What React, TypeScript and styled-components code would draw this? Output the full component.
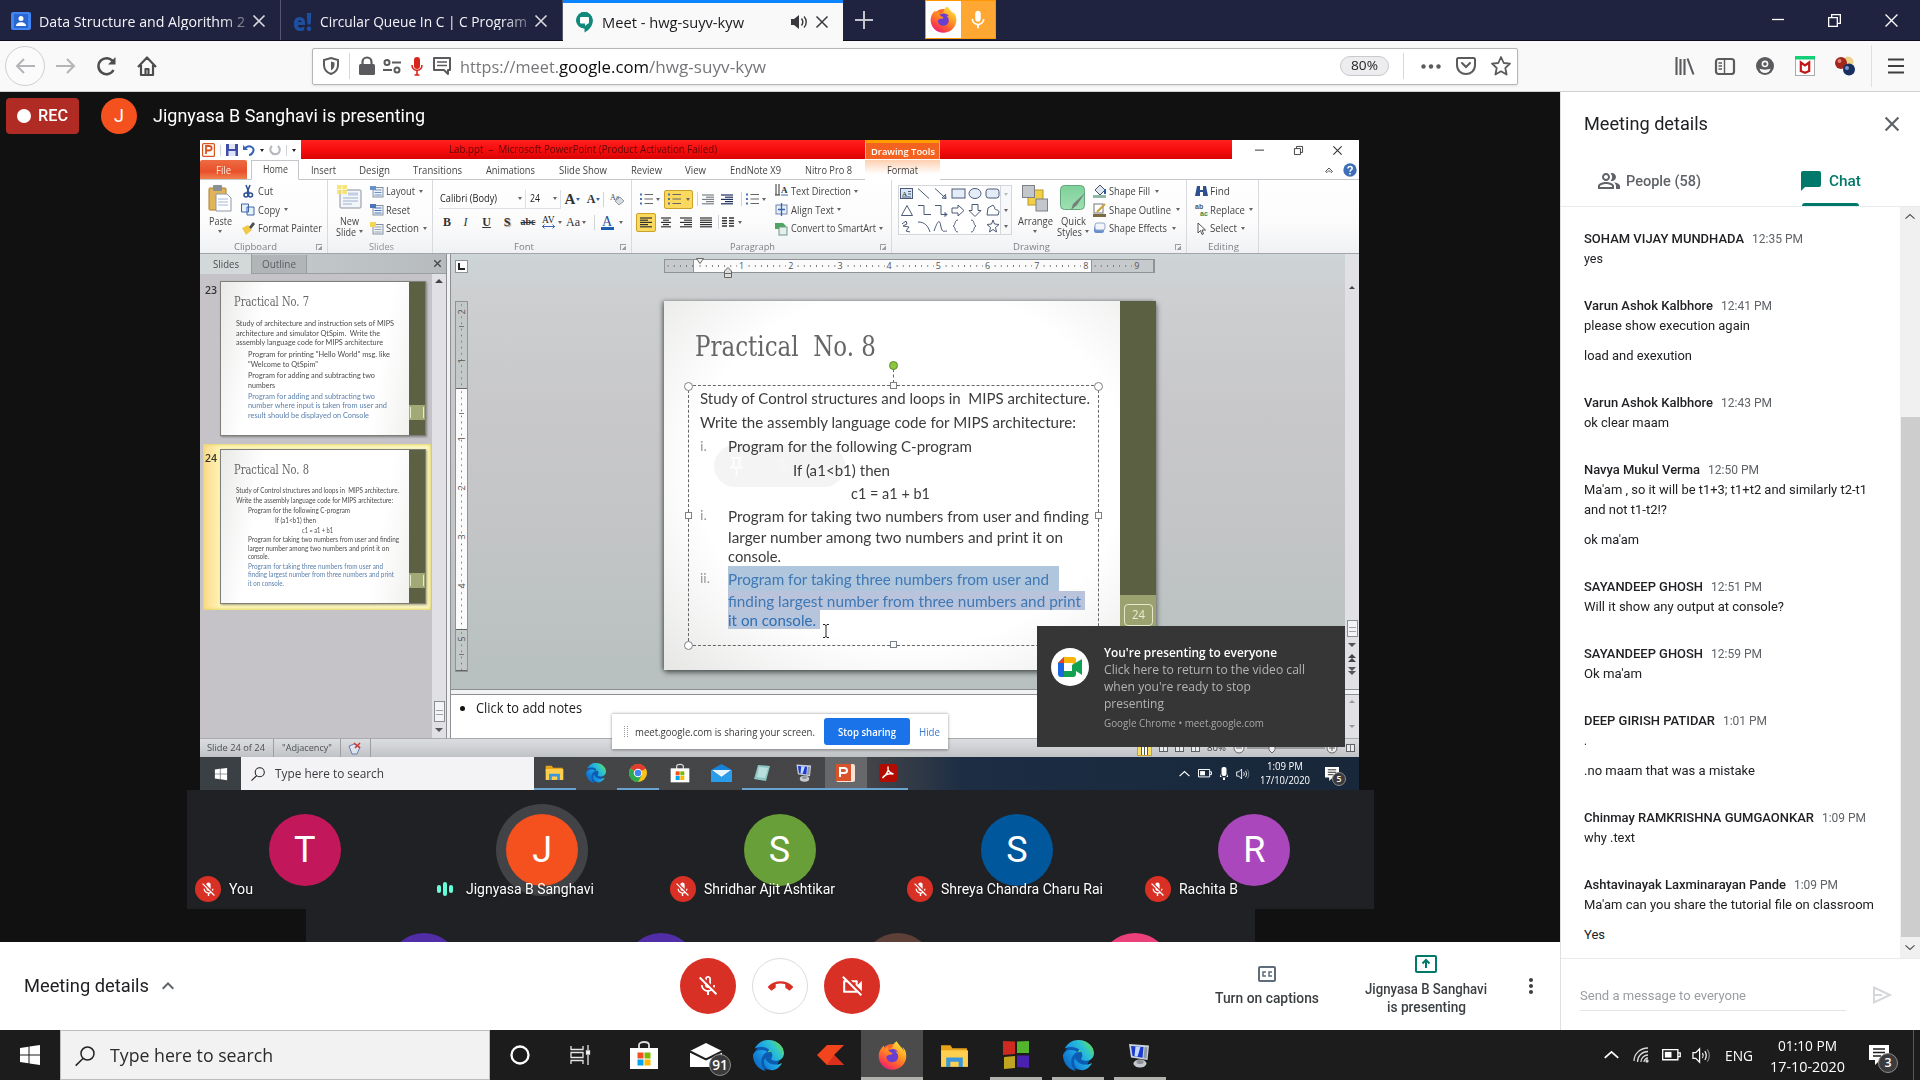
import React, { useLayoutEffect, useRef } from 'react';
import styled, { createGlobalStyle, css } from 'styled-components';
import {
  MdMicOff, MdOutlineMicOff, MdCallEnd, MdOutlineVideocamOff, MdOutlinePeopleAlt,
  MdChatBubble, MdMoreVert, MdKeyboardArrowUp, MdMic, MdOutlinePushPin,
} from 'react-icons/md';
import { FaEdge, FaFirefoxBrowser, FaWindows } from 'react-icons/fa6';

const SEG = '"Open Sans", "Noto Sans", sans-serif';
const ROB = 'Roboto, "Liberation Sans", sans-serif';
const LAT = 'Lato, "Open Sans", sans-serif';
const SER = '"Liberation Serif", "DejaVu Serif", serif';
const SLAB = '"DejaVu Serif Condensed", "DejaVu Serif", serif';

const Global = createGlobalStyle`
  * { box-sizing: border-box; }
  html, body { margin: 0; padding: 0; }
  body { width: 1920px; height: 1080px; overflow: hidden; font-family: ${ROB}; background: #111; }
  svg { display: block; flex: none; overflow: visible; }
`;

/* ---------- text that fills a known width ---------- */

type TextStyle = {
  $w: number; $s: number; $c?: string; $f?: string; $b?: number; $ml?: number; $lh?: number;
};
const TextBox = styled.span<TextStyle>`
  display: block;
  flex: none;
  width: ${(p) => p.$w}px;
  margin-left: ${(p) => p.$ml ?? 0}px;
  font: ${(p) => p.$b ?? 400} ${(p) => p.$s}px/${(p) => p.$lh ?? 1.2} ${(p) => p.$f ?? SEG};
  color: ${(p) => p.$c ?? '#444'};
  white-space: pre;
`;
const TextRun = styled.span`
  display: inline-block;
  transform-origin: 0 50%;
`;
type TProps = { w: number; s: number; c?: string; f?: string; b?: number; ml?: number; lh?: number; children: string };
function T({ w, s, c, f, b, ml, lh, children }: TProps) {
  const ref = useRef<HTMLSpanElement>(null);
  useLayoutEffect(() => {
    const el = ref.current;
    if (!el) return;
    el.style.transform = 'none';
    const natural = el.getBoundingClientRect().width;
    if (natural > 0) el.style.transform = `scaleX(${w / natural})`;
  }, [w, children]);
  return (
    <TextBox $w={w} $s={s} $c={c} $f={f} $b={b} $ml={ml} $lh={lh}>
      <TextRun ref={ref}>{children}</TextRun>
    </TextBox>
  );
}

/* ---------- shared icons ---------- */

type IconProps = { size?: number; color?: string };

const Defs = styled.svg`
  position: absolute;
  width: 0;
  height: 0;
`;
const Gradients = () => (
  <Defs>
    <defs>
      <linearGradient id="edgeFill" x1="0" y1="0.9" x2="1" y2="0.2">
        <stop offset="0" stopColor="#0b5cb8" />
        <stop offset="0.45" stopColor="#1a9be6" />
        <stop offset="0.75" stopColor="#2cc3d2" />
        <stop offset="1" stopColor="#62dc5a" />
      </linearGradient>
      <linearGradient id="foxFill" x1="0.8" y1="0" x2="0.2" y2="1">
        <stop offset="0" stopColor="#ffe84a" />
        <stop offset="0.4" stopColor="#ff9a1f" />
        <stop offset="0.75" stopColor="#ff4a3d" />
        <stop offset="1" stopColor="#e3168b" />
      </linearGradient>
      <linearGradient id="quickFill" x1="0" y1="0" x2="0" y2="1">
        <stop offset="0" stopColor="#7ed09a" />
        <stop offset="1" stopColor="#9fe0b2" />
      </linearGradient>
    </defs>
  </Defs>
);

const Edge = ({ size = 30 }: IconProps) => (
  <svg width={size} height={size} viewBox="0 0 30 30">
    <circle cx="13.500" cy="16" r="12.500" fill="#0d5cb4" />
    <path d="M14 12c5-2 8 1 8 4 0 4 4 3 6 0l1-8-9-5z" fill="#4fd46c" />
    <FaEdge size={30} fill="url(#edgeFill)" />
  </svg>
);
const Firefox = ({ size = 28 }: IconProps) => (
  <svg width={size} height={size} viewBox="0 0 28 28">
    <circle cx="14" cy="15" r="12" fill="#ff6a2c" />
    <circle cx="14.5" cy="14.5" r="7" fill="#6a3ed0" />
    <FaFirefoxBrowser size={28} fill="url(#foxFill)" />
  </svg>
);
const Folder = ({ size = 28 }: IconProps) => (
  <svg width={size} height={size} viewBox="0 0 28 28">
    <path d="M1 4h9l2 3h14v5H1z" fill="#e8a317" />
    <path d="M1 9h26v16H1z" fill="#ffd04f" />
    <path d="M6 25v-9h16v9h-4v-5h-8v5z" fill="#3a97dc" />
  </svg>
);
const Store = ({ size = 30 }: IconProps) => (
  <svg width={size} height={size} viewBox="0 0 30 30">
    <path d="M10 9V5c0-4 10-4 10 0v4" fill="none" stroke="#ddd" strokeWidth="1.8" />
    <path d="M1 8h28v21H1z" fill="#fff" />
    <path d="M8.500 12.500h6v6h-6z" fill="#f25022" />
    <path d="M15.500 12.500h6v6h-6z" fill="#7fba00" />
    <path d="M8.500 19.500h6v6h-6z" fill="#00a4ef" />
    <path d="M15.500 19.500h6v6h-6z" fill="#ffb900" />
  </svg>
);
const Computer = ({ size = 26 }: IconProps) => (
  <svg width={size} height={size} viewBox="0 0 26 26">
    <path d="M2 2l20 1.500-1.500 14.500L4 15.500z" fill="#cdd3db" />
    <path d="M4 4l12.500 1-1 10.800L5.500 14z" fill="#1a3bd0" />
    <path d="M8.500 4.400l5 .4-3 9.900-3-.5z" fill="#c9d6ff" />
    <path d="M17.500 5l3 .3-1 11.200-3-.4z" fill="#8f98a5" />
    <ellipse cx="13" cy="21.500" rx="6.500" ry="4" fill="#c6c9cd" />
    <ellipse cx="13" cy="20" rx="3.500" ry="2" fill="#8d9299" />
  </svg>
);
const Search = ({ size = 20, color = '#222' }: IconProps) => (
  <svg width={size} height={size} viewBox="0 0 20 20" fill="none" stroke={color} strokeWidth="1.500">
    <circle cx="12.500" cy="7.500" r="6.500" />
    <path d="M8 12.500L.7 19.600" />
  </svg>
);
const Cross = ({ size = 12, color = '#fff', w = 1.5 }: IconProps & { w?: number }) => (
  <svg width={size} height={size} viewBox="0 0 12 12" stroke={color} strokeWidth={w}>
    <path d="M.5.5l11 11M11.500.5l-11 11" />
  </svg>
);
const Restore = ({ size = 12, color = '#fff' }: IconProps) => (
  <svg width={size} height={size} viewBox="0 0 12 12" stroke={color} fill="none" strokeWidth="1.200">
    <path d="M.6 3.400h8v8h-8zM3.400 3.400V.6h8v8H8.600" />
  </svg>
);
const Dash = ({ size = 12, color = '#fff' }: IconProps) => (
  <svg width={size} height={size} viewBox="0 0 12 12" stroke={color}>
    <path d="M0 5.500h12" strokeWidth="1.300" />
  </svg>
);
const Chevron = ({ size = 14, color = '#fff' }: IconProps) => (
  <svg width={size} height={size / 2} viewBox="0 0 14 7" stroke={color} fill="none" strokeWidth="1.600">
    <path d="M.7 6.500L7 .8l6.300 5.700" />
  </svg>
);
const Speaker = ({ size = 20, color = '#fff' }: IconProps) => (
  <svg width={size} height={size} viewBox="0 0 20 20" stroke={color} fill="none" strokeWidth="1.300">
    <path d="M1 7h3l4-4v14l-4-4H1zM11 7.500c1 1.500 1 3.500 0 5M13.500 5.500c2 2.500 2 6.500 0 9" />
    <path d="M16 3.500c3 3.500 3 9.500 0 13" opacity=".45" />
  </svg>
);
const Battery = ({ size = 18, color = '#fff' }: IconProps) => (
  <svg width={size} height={size * 0.6} viewBox="0 0 20 12" fill="none" stroke={color} strokeWidth="1.400">
    <path d="M.7.7h16v10.600h-16zM17 4h2.200v4H17" />
    <path d="M3 3h7v6H3z" fill={color} stroke="none" />
  </svg>
);
const Note = ({ size = 20 }: IconProps) => (
  <svg width={size} height={size} viewBox="0 0 20 20">
    <path d="M0 0h20v15h-9l-5 5v-5H0z" fill="#fff" />
    <path d="M4 4h12M4 7.500h12M4 11h8" stroke="#1c1c1c" strokeWidth="1.300" />
  </svg>
);

/* ---------- browser chrome ---------- */

const TabBar = styled.div`
  display: flex;
  align-items: stretch;
  height: 41px;
  background: #202340;
  border-bottom: 1px solid #0d0e1d;
`;
const BrowserTab = styled.div<{ $active?: boolean; $w: number }>`
  display: flex;
  align-items: center;
  width: ${(p) => p.$w}px;
  padding-left: 11px;
  padding-top: 2px;
  border-right: 1px solid #55586e;
  ${(p) => p.$active && css`
    height: 41px;
    padding-top: 0;
    background: #f9f9fa;
    border-top: 3px solid #0a84ff;
    border-right: 0;
  `}
`;
const Favicon = styled.div`
  display: flex;
  width: 20px;
  margin-right: 8px;
  justify-content: center;
`;
const TabTitle = styled.div<{ $fade?: boolean }>`
  flex: 1;
  ${(p) => p.$fade && css`
    -webkit-mask-image: linear-gradient(90deg, #000 85%, rgba(0, 0, 0, 0.15));
    mask-image: linear-gradient(90deg, #000 85%, rgba(0, 0, 0, 0.15));
  `}
`;
const TabClose = styled.div`
  display: flex;
  align-items: center;
  gap: 7px;
  margin: 0 15px 0 0;
`;
const NewTab = styled.div`
  display: flex;
  align-items: center;
  justify-content: center;
  width: 42px;
`;
const ShareIndicator = styled.div`
  display: flex;
  width: 71px;
  height: 39px;
  margin-left: 40px;
  border: 1px solid #ff9500;
  background: #ffa733;
`;
const IndicatorHalf = styled.div<{ $white?: boolean }>`
  display: flex;
  flex: 1;
  align-items: center;
  justify-content: center;
  background: ${(p) => (p.$white ? '#fff' : 'transparent')};
`;
const WindowButtons = styled.div<{ $gap: number; $mr: number }>`
  display: flex;
  align-items: center;
  gap: ${(p) => p.$gap}px;
  margin-left: auto;
  margin-right: ${(p) => p.$mr}px;
`;
const NavBar = styled.div`
  display: flex;
  align-items: center;
  height: 51px;
  padding-left: 5px;
  background: #f9f9fa;
  border-bottom: 1px solid #d0d0d2;
`;
const BackButton = styled.div`
  display: flex;
  width: 40px;
  height: 40px;
  align-items: center;
  justify-content: center;
  border: 1px solid #cfcfd2;
  border-radius: 50%;
  background: #fbfbfc;
`;
const NavIcon = styled.div<{ $w?: number; $ml?: number }>`
  display: flex;
  width: ${(p) => p.$w ?? 40}px;
  margin-left: ${(p) => p.$ml ?? 0}px;
  align-items: center;
  justify-content: center;
`;
const UrlBar = styled.div`
  display: flex;
  align-items: center;
  width: 1206px;
  height: 37px;
  margin-left: 145px;
  border: 1px solid #b6b6b8;
  border-radius: 2px;
  background: #fff;
  box-shadow: 0 1px 3px rgba(0, 0, 0, 0.1);
`;
const Divider = styled.div<{ $h: number; $c?: string }>`
  width: 1px;
  height: ${(p) => p.$h}px;
  flex: none;
  background: ${(p) => p.$c ?? '#d7d7db'};
`;
const UrlText = styled.div`
  display: flex;
  flex: 1;
  padding-left: 9px;
  padding-top: 2px;
`;
const ZoomPill = styled.div`
  display: flex;
  width: 49px;
  height: 20px;
  align-items: center;
  justify-content: center;
  margin-right: 14px;
  border: 1px solid #c9c9cc;
  border-radius: 10px;
  background: #ededf0;
`;
const ToolIcons = styled.div`
  display: flex;
  align-items: center;
  margin-left: auto;
  padding-right: 5px;
`;

const g = '#5b5b5e';

function Browser() {
  return (
    <>
      <TabBar>
        <BrowserTab $w={281}>
          <Favicon>
            <svg width="20" height="18" viewBox="0 0 20 18">
              <rect width="20" height="18" rx="2" fill="#4285f4" />
              <rect x="3" y="2" width="14" height="14" fill="#2a66d0" />
              <circle cx="10" cy="6.500" r="2.500" fill="#fff" />
              <path d="M5 14c0-5 10-5 10 0z" fill="#fff" />
            </svg>
          </Favicon>
          <TabTitle $fade><T w={206} s={15} c="#f4f4f8">Data Structure and Algorithm 2</T></TabTitle>
          <TabClose><Cross color="#d9d9e0" w={1.6} /></TabClose>
        </BrowserTab>
        <BrowserTab $w={282}>
          <Favicon><T w={19} s={25} b={800} c="#1c4fa0" lh={1}>e!</T></Favicon>
          <TabTitle $fade><T w={207} s={15} c="#f4f4f8">Circular Queue In C | C Program</T></TabTitle>
          <TabClose><Cross color="#d9d9e0" w={1.6} /></TabClose>
        </BrowserTab>
        <BrowserTab $w={280} $active>
          <Favicon>
            <svg width="17" height="21" viewBox="0 0 17 21">
              <path d="M8.500 0a8.300 8.300 0 018.300 8.300c0 6-4 10-8.300 12.200v-4A8.200 8.200 0 018.500 0z" fill="#11897b" />
              <circle cx="8.300" cy="8.300" r="8.200" fill="#11897b" />
              <rect x="4" y="5" width="9" height="6.500" rx="1" fill="#fff" />
              <path d="M9 11h3.500L9 14z" fill="#fff" />
            </svg>
          </Favicon>
          <TabTitle><T w={142} s={15} c="#1a1a1e">Meet - hwg-suyv-kyw</T></TabTitle>
          <TabClose>
            <svg width="18" height="16" viewBox="0 0 18 16">
              <path d="M0 5h3l5-4v14l-5-4H0z" fill="#38383d" />
              <path d="M10.500 4.500c1.500 2 1.500 5 0 7M13 2.500c3 3 3 8 0 11" fill="none" stroke="#38383d" strokeWidth="1.400" />
            </svg>
            <Cross color="#38383d" w={1.5} />
          </TabClose>
        </BrowserTab>
        <NewTab>
          <svg width="18" height="18" viewBox="0 0 18 18" stroke="#c3c4ce" strokeWidth="2"><path d="M9 0v18M0 9h18" /></svg>
        </NewTab>
        <ShareIndicator>
          <IndicatorHalf $white><Firefox size={27} /></IndicatorHalf>
          <IndicatorHalf><MdMic size={22} color="#fff" /></IndicatorHalf>
        </ShareIndicator>
        <WindowButtons $gap={44} $mr={22}>
          <Dash size={12} /><Restore size={13} /><Cross size={13} w={1.2} />
        </WindowButtons>
      </TabBar>
      <NavBar>
        <BackButton>
          <svg width="20" height="16" viewBox="0 0 20 16" stroke="#b5b5b8" strokeWidth="2" fill="none"><path d="M9 1L2 8l7 7M2 8h18" /></svg>
        </BackButton>
        <NavIcon $w={42}>
          <svg width="20" height="16" viewBox="0 0 20 16" stroke="#b5b5b8" strokeWidth="2" fill="none"><path d="M11 1l7 7-7 7M18 8H0" /></svg>
        </NavIcon>
        <NavIcon>
          <svg width="20" height="20" viewBox="0 0 20 20" stroke="#4d4d50" strokeWidth="2.500" fill="none"><path d="M16.500 14A8 8 0 1116 5.500" /><path d="M18.500 1v7.500H11z" fill="#4d4d50" stroke="none" /></svg>
        </NavIcon>
        <NavIcon>
          <svg width="20" height="20" viewBox="0 0 20 20" stroke="#4d4d50" strokeWidth="2.200" fill="none" strokeLinejoin="round"><path d="M1 11l9-9.500 9 9.500M4 9v10h12V9M8.500 19v-6h3v6" /></svg>
        </NavIcon>
        <UrlBar>
          <NavIcon $w={36}>
            <svg width="16" height="18" viewBox="0 0 16 18" stroke={g} strokeWidth="2" fill="none"><path d="M8 1l7 2v5c0 5-3 7.500-7 9-4-1.500-7-4-7-9V3z" /><path d="M8 4.500v9c2-1 3.500-3 3.500-6v-2z" fill={g} stroke="none" /></svg>
          </NavIcon>
          <Divider $h={26} />
          <NavIcon $w={33}>
            <svg width="16" height="18" viewBox="0 0 16 18"><rect x="0" y="7" width="16" height="11" rx="1.500" fill={g} /><path d="M3.500 8V5a4.500 4.500 0 019 0v3" stroke={g} strokeWidth="2.200" fill="none" /></svg>
          </NavIcon>
          <NavIcon $w={18}>
            <svg width="18" height="15" viewBox="0 0 18 15" stroke={g} strokeWidth="2" fill="none"><circle cx="4" cy="3.500" r="2.500" /><path d="M9 3.500h9M0 11h9" strokeWidth="2" /><circle cx="14" cy="11" r="2.500" /></svg>
          </NavIcon>
          <NavIcon $w={32}>
            <svg width="12" height="19" viewBox="0 0 12 19"><rect x="3" y="0" width="6" height="12" rx="3" fill="#d7261d" /><path d="M1 8c0 7 10 7 10 0M6 13v5M3.500 18h5" stroke="#d7261d" strokeWidth="1.600" fill="none" /></svg>
          </NavIcon>
          <NavIcon $w={18}>
            <svg width="20" height="18" viewBox="0 0 20 18" stroke={g} fill="none"><path d="M2 1h16v12h-2v4l-4-4H2z" strokeWidth="2" strokeLinejoin="round" /><path d="M5 5h10M5 8.500h10" strokeWidth="1.500" /></svg>
          </NavIcon>
          <UrlText>
            <T w={99} s={17} c="#77777b">https://meet.</T>
            <T w={90} s={17} c="#0c0c0d">google.com</T>
            <T w={117} s={17} c="#77777b">/hwg-suyv-kyw</T>
          </UrlText>
          <ZoomPill><T w={27} s={13} c="#1c1c1e">80%</T></ZoomPill>
          <Divider $h={26} />
          <NavIcon $w={54}>
            <svg width="20" height="5" viewBox="0 0 20 5" fill={g}><circle cx="2.500" cy="2.500" r="2.200" /><circle cx="10" cy="2.500" r="2.200" /><circle cx="17.500" cy="2.500" r="2.200" /></svg>
          </NavIcon>
          <NavIcon $w={16}>
            <svg width="20" height="18" viewBox="0 0 20 18" stroke={g} fill="none" strokeWidth="2"><path d="M2.500 1h15c1 0 1.500.5 1.500 1.500V8c0 12-18 12-18 0V2.500C1 1.500 1.500 1 2.500 1z" /><path d="M6 6l4 4 4-4" strokeLinecap="round" /></svg>
          </NavIcon>
          <NavIcon $w={33} $ml={10}>
            <svg width="20" height="20" viewBox="0 0 20 20" stroke={g} fill="none" strokeWidth="1.800" strokeLinejoin="round"><path d="M10 1l2.700 6 6.300.7-4.700 4.300 1.300 6.500L10 15.300l-5.600 3.200 1.300-6.500L1 7.700 7.300 7z" /></svg>
          </NavIcon>
        </UrlBar>
        <ToolIcons>
          <NavIcon>
            <svg width="20" height="18" viewBox="0 0 20 18" stroke={g} strokeWidth="2.100" fill="none"><path d="M1.500 0v18M5.500 2v16M9.500 2v16M12.500 1.500L18.500 17.500" /></svg>
          </NavIcon>
          <NavIcon>
            <svg width="20" height="17" viewBox="0 0 20 17" stroke={g} strokeWidth="2.200" fill="none"><rect x="1" y="1" width="18" height="15" rx="2.500" /><path d="M9.500 1v15M3.500 5h3.500M3.500 8h3.500M3.500 11h3.500" strokeWidth="1.400" /></svg>
          </NavIcon>
          <NavIcon>
            <svg width="18" height="18" viewBox="0 0 18 18"><circle cx="9" cy="9" r="9" fill={g} /><circle cx="9" cy="6.800" r="3.400" fill="#f9f9fa" /><path d="M3.500 11.500c2 1.500 9 1.500 11 0-1 6-10 6-11 0z" fill="#f9f9fa" /><circle cx="9" cy="7" r="1.800" fill={g} /></svg>
          </NavIcon>
          <NavIcon>
            <svg width="20" height="20" viewBox="0 0 20 20"><rect x=".5" y=".5" width="19" height="19" fill="#fff" stroke="#aaa" /><path d="M0 0h20v3.500H0z" fill="#13cf75" /><path d="M5.800 15V6.500l4.200 3 4.200-3V15L10 16.800z" fill="none" stroke="#c01818" strokeWidth="2.200" /></svg>
          </NavIcon>
          <NavIcon>
            <svg width="20" height="20" viewBox="0 0 20 20"><circle cx="13" cy="6" r="5.500" fill="#efd28a" /><circle cx="6" cy="7" r="6" fill="#a3261c" /><circle cx="4.500" cy="5" r="2" fill="#d98078" /><circle cx="14" cy="13.500" r="6" fill="#17305f" /><circle cx="12" cy="12" r="2" fill="#7d96d0" /></svg>
          </NavIcon>
          <NavIcon $w={12}><Divider $h={42} $c="#e0e0e2" /></NavIcon>
          <NavIcon $w={38}>
            <svg width="16" height="16" viewBox="0 0 16 16" stroke="#3f3f42" strokeWidth="2.200"><path d="M0 1.500h16M0 8h16M0 14.500h16" /></svg>
          </NavIcon>
        </ToolIcons>
      </NavBar>
    </>
  );
}

/* ---------- shared screen: ribbon ---------- */

const Shared = styled.div`
  position: relative;
  display: flex;
  flex-direction: column;
  flex: none;
  width: 1159px;
  height: 650px;
  margin-left: 200px;
  overflow: hidden;
  background: #fff;
`;
const PptTitle = styled.div`
  display: flex;
  height: 20px;
`;
const QuickAccess = styled.div`
  display: flex;
  width: 101px;
  align-items: center;
  padding-left: 2px;
  gap: 5px;
`;
const RedBar = styled.div`
  display: flex;
  width: 931px;
  height: 19px;
  align-items: center;
  background: linear-gradient(#ff2020, #f80d0d 50%, #d80404);
`;
const DrawingTools = styled.div`
  display: flex;
  align-self: flex-start;
  justify-content: center;
  width: 75px;
  height: 19px;
  margin-left: 148px;
  padding-top: 4px;
  border-top: 3px solid #ff9c00;
  border-left: 1px solid #ffb26b;
  border-right: 1px solid #ffb26b;
  background: #f4621f;
`;
const MenuTabs = styled.div`
  display: flex;
  align-items: center;
  height: 20px;
  border-bottom: 1px solid #c3c6ca;
`;
const FileTab = styled.div`
  display: flex;
  width: 47px;
  height: 19px;
  align-items: center;
  justify-content: center;
  border-radius: 2px 2px 0 0;
  background: linear-gradient(#ef6b43, #e8502a 60%, #f0804c);
`;
const HomeTab = styled.div`
  display: flex;
  width: 48px;
  height: 20px;
  margin-left: 4px;
  padding-bottom: 1px;
  align-items: center;
  justify-content: center;
  border: 1px solid #c3c6ca;
  border-bottom-color: #fff;
  background: #fff;
`;
const FormatTab = styled.div`
  display: flex;
  width: 75px;
  height: 20px;
  margin-left: 13px;
  align-items: center;
  justify-content: center;
  background: linear-gradient(#fdd0b0, #fff 70%);
`;
const Ribbon = styled.div`
  display: flex;
  height: 74px;
  border-bottom: 1px solid #a2a5aa;
  background: linear-gradient(#fff, #fbfbfc 60%, #eff1f3);
`;
const Group = styled.div<{ $w: number; $pl: number }>`
  display: grid;
  grid-template: 60px 13px / 1fr;
  width: ${(p) => p.$w}px;
  padding-left: ${(p) => p.$pl}px;
  border-right: 1px solid #d8dadd;
`;
const GroupBody = styled.div`
  display: flex;
`;
const GroupLabel = styled.div`
  display: flex;
  align-items: center;
`;
const Launcher = styled.div`
  width: 6px;
  height: 6px;
  margin-left: auto;
  margin-right: 5px;
  border-left: 1px solid #9b9ea3;
  border-top: 1px solid #9b9ea3;
  background: linear-gradient(135deg, transparent 55%, #9b9ea3 55%);
`;
const Big = styled.div<{ $w: number; $ml?: number }>`
  display: flex;
  flex-direction: column;
  align-items: center;
  width: ${(p) => p.$w}px;
  margin-left: ${(p) => p.$ml ?? 0}px;
  padding-top: 5px;
`;
const BigIcon = styled.div`
  height: 30px;
`;
const BigRow = styled.div`
  display: flex;
  height: 11px;
  align-items: center;
  gap: 3px;
`;
const SmallCol = styled.div<{ $ml?: number }>`
  display: flex;
  flex-direction: column;
  padding-top: 2px;
  margin-left: ${(p) => p.$ml ?? 0}px;
`;
const SmallRow = styled.div<{ $gap?: number }>`
  display: flex;
  height: 18.5px;
  align-items: center;
  gap: ${(p) => p.$gap ?? 3}px;
`;
const Caret = styled.i<{ $ml?: number; $c?: string }>`
  flex: none;
  width: 0;
  height: 0;
  margin-left: ${(p) => p.$ml ?? 0}px;
  border: 2.5px solid transparent;
  border-top: 3px solid ${(p) => p.$c ?? '#666'};
  border-bottom: 0;
`;
const ToolCol = styled.div<{ $w: number }>`
  display: flex;
  flex-direction: column;
  flex: none;
  width: ${(p) => p.$w}px;
  padding-top: 8px;
`;
const ToolRow = styled.div<{ $h: number }>`
  display: flex;
  align-items: center;
  height: ${(p) => p.$h}px;
`;
const Combo = styled.div<{ $w: number }>`
  display: flex;
  align-items: center;
  width: ${(p) => p.$w}px;
  height: 19px;
  border-right: 1px solid #dcdfe3;
  border-bottom: 1px solid #dcdfe3;
`;
const Glyph = styled.span<{ $w: number; $s: number; $i?: boolean; $u?: boolean; $b?: boolean; $strike?: boolean; $sh?: boolean }>`
  flex: none;
  width: ${(p) => p.$w}px;
  text-align: center;
  font: ${(p) => (p.$i ? 'italic' : 'normal')} ${(p) => (p.$b ? 700 : 400)} ${(p) => p.$s}px/1 ${SER};
  color: #333;
  text-decoration: ${(p) => (p.$u ? 'underline' : p.$strike ? 'line-through' : 'none')};
  text-shadow: ${(p) => (p.$sh ? '1px 1px 1px #888' : 'none')};
`;
const Cell = styled.div<{ $w: number; $on?: boolean; $h?: number }>`
  display: flex;
  flex: none;
  align-items: center;
  justify-content: center;
  width: ${(p) => p.$w}px;
  height: ${(p) => p.$h ?? 19}px;
  ${(p) => p.$on && css`
    border: 1px solid #c9a227;
    border-radius: 2px;
    background: #fbd95e;
  `}
`;
const Bar = styled.i<{ $h: number }>`
  width: 1px;
  height: ${(p) => p.$h}px;
  background: #d0d3d8;
`;
const Gallery = styled.div`
  display: flex;
  width: 114px;
  height: 50px;
  margin-top: 5px;
  border: 1px solid #d3d6da;
  background: #fff;
`;
const GalleryScroll = styled.div`
  display: flex;
  flex-direction: column;
  width: 12px;
  align-items: center;
  justify-content: space-around;
  margin-left: auto;
  border-left: 1px solid #d3d6da;
  background: #f7f8f9;
`;

const Lines = ({ k = 0, c = '#333', h = 11 }: { k?: number; c?: string; h?: number }) => {
  const w = [[12, 8, 12, 8, 12], [10, 6, 10, 6, 10], [12, 8, 12, 8, 12], [12, 12, 12, 12, 12]][k];
  return (
    <svg width="12" height={h} viewBox="0 0 12 11" stroke={c} strokeWidth="1.200">
      {w.map((x, i) => {
        const s = k === 2 ? 12 - x : k === 1 ? (12 - x) / 2 : 0;
        return <path key={i} d={`M${s} ${1 + i * 2.2}h${x}`} />;
      })}
    </svg>
  );
};
const ListIcon = ({ blue = true }: { blue?: boolean }) => (
  <svg width="13" height="12" viewBox="0 0 13 12">
    <path d="M4.500 1.500h8.500M4.500 6h8.500M4.500 10.500h8.500" stroke="#666" strokeWidth="1.200" />
    <path d="M0 .5h2v2H0zM0 5h2v2H0zM0 9.500h2v2H0z" fill={blue ? '#4a73b8' : '#333'} />
  </svg>
);
const PageIcon = ({ c = '#6a92c8', star = false }: { c?: string; star?: boolean }) => (
  <svg width="14" height="13" viewBox="0 0 14 13">
    <rect x="3" y="2.500" width="10" height="9.500" fill="#eef3fa" stroke="#7b8797" strokeWidth=".9" />
    <path d="M4.500 5h7M4.500 7.500h7M4.500 10h7" stroke={c} />
    {star && <path d="M0 0h6v5H0z" fill="#f4d650" />}
    {!star && <path d="M0 1h6v4H0z" fill={c} />}
  </svg>
);

const menu: [string, number, number][] = [
  ['Insert', 25, 12], ['Design', 31, 23], ['Transitions', 49, 23], ['Animations', 49, 24],
  ['Slide Show', 48, 24], ['Review', 31, 24], ['View', 21, 23], ['EndNote X9', 51, 24], ['Nitro Pro 8', 47, 24],
];

function PptRibbon() {
  return (
    <>
      <PptTitle>
        <QuickAccess>
          <svg width="13" height="14" viewBox="0 0 13 14"><rect x=".6" y=".6" width="11.800" height="12.800" rx="1" fill="#fff" stroke="#d9541e" strokeWidth="1.200" /><path d="M4 11V3h3c3.500 0 3.500 4.500 0 4.500H4" stroke="#d9541e" strokeWidth="1.800" fill="none" /></svg>
          <Bar $h={11} />
          <svg width="12" height="12" viewBox="0 0 12 12"><path d="M0 0h12v12H0z" fill="#3f4fa8" /><path d="M3 0h6v5H3zM2.500 7h7v5h-7z" fill="#dfe5f5" /></svg>
          <svg width="12" height="12" viewBox="0 0 12 12" fill="none" stroke="#3463b8" strokeWidth="2"><path d="M2 4c5-4 10 0 8 4-1 2-3 3-4 3" /><path d="M0 1v5h5z" fill="#3463b8" stroke="none" /></svg>
          <Caret $c="#222" />
          <svg width="12" height="12" viewBox="0 0 12 12" fill="none" stroke="#b5b8bd" strokeWidth="2"><path d="M3 2c-4 4 0 9 4 8 4 0 5-5 2-8" /></svg>
          <Bar $h={11} />
          <Caret $c="#222" />
        </QuickAccess>
        <RedBar>
          <T w={268} s={10.5} c="#5e0606" ml={148}>Lab.ppt  –  Microsoft PowerPoint (Product Activation Failed)</T>
          <DrawingTools><T w={64} s={9.5} b={600} c="#fff" lh={1}>Drawing Tools</T></DrawingTools>
        </RedBar>
        <WindowButtons $gap={30} $mr={17}>
          <Dash size={9} color="#333" /><Restore size={9} color="#333" /><Cross size={9} color="#333" w={1.5} />
        </WindowButtons>
      </PptTitle>
      <MenuTabs>
        <FileTab><T w={15} s={10} c="#ffe9df">File</T></FileTab>
        <HomeTab><T w={25} s={10}>Home</T></HomeTab>
        {menu.map(([t, w, ml]) => <T key={t} w={w} ml={ml} s={10}>{t}</T>)}
        <FormatTab><T w={31} s={10}>Format</T></FormatTab>
        <WindowButtons $gap={10} $mr={2}>
          <svg width="8" height="7" viewBox="0 0 8 7" stroke="#555" fill="none"><path d="M.5 5.500L4 2l3.500 3.500-1.500 1-2-2-2 2z" /></svg>
          <svg width="14" height="14" viewBox="0 0 14 14"><circle cx="7" cy="7" r="6.700" fill="#3f6fb8" /><path d="M5 5.500c0-3 4.200-2.500 4.200-.3C9.200 7 7 6.800 7 8.700M7 10v1.500" stroke="#fff" strokeWidth="1.500" fill="none" /></svg>
        </WindowButtons>
      </MenuTabs>
      <Ribbon>
        <Group $w={128} $pl={7}>
          <GroupBody>
            <Big $w={26}>
              <BigIcon>
                <svg width="24" height="27" viewBox="0 0 24 27"><rect x="1" y="3" width="17" height="22" rx="1" fill="#e2b45a" stroke="#a97e2e" /><rect x="5" y="0" width="9" height="6" rx="1" fill="#8b8f97" /><path d="M8 9h11l4 4v13H8z" fill="#fff" stroke="#8d97a6" /><path d="M10 14h10M10 17h10M10 20h10" stroke="#a6b8d4" /></svg>
              </BigIcon>
              <BigRow><T w={23} s={10}>Paste</T></BigRow>
              <BigRow><Caret /></BigRow>
            </Big>
            <SmallCol $ml={8}>
              <SmallRow>
                <svg width="14" height="13" viewBox="0 0 14 13" fill="none" stroke="#2c4f94" strokeWidth="1.500"><path d="M5 0l3 8M9 0L6 8" /><circle cx="5" cy="10" r="2" /><circle cx="9.500" cy="10" r="2" /></svg>
                <T w={15} s={10}>Cut</T>
              </SmallRow>
              <SmallRow>
                <svg width="14" height="13" viewBox="0 0 14 13" stroke="#3c66a8" fill="#e6eefa"><path d="M.5 1h7v8h-7zM6 4h7v8H6z" /></svg>
                <T w={22} s={10}>Copy</T><Caret $ml={1} />
              </SmallRow>
              <SmallRow>
                <svg width="14" height="13" viewBox="0 0 14 13"><path d="M1 6l6-3 4 5-6 5z" fill="#f0c94a" /><path d="M8 5l4-5 2 2-4 5z" fill="#4a4d55" /></svg>
                <T w={64} s={10}>Format Painter</T>
              </SmallRow>
            </SmallCol>
          </GroupBody>
          <GroupLabel><T w={43} ml={27} s={9.5} c="#7d8085">Clipboard</T><Launcher /></GroupLabel>
        </Group>
        <Group $w={105} $pl={5}>
          <GroupBody>
            <Big $w={33}>
              <BigIcon>
                <svg width="25" height="26" viewBox="0 0 25 26"><rect x="3" y="5" width="21" height="18" rx="1" fill="#f2f5f9" stroke="#8b929d" /><path d="M6 13h15M6 16h15M6 19h9" stroke="#9eb0cc" /><rect x="11" y="7.500" width="10" height="3" fill="#c2cfe4" /><path d="M0 0h10v9H0z" fill="#f5de5c" opacity=".8" /><path d="M5 0v9M0 4.500h10" stroke="#fff7c4" /></svg>
              </BigIcon>
              <BigRow><T w={19} s={10}>New</T></BigRow>
              <BigRow><T w={20} s={10}>Slide</T><Caret /></BigRow>
            </Big>
            <SmallCol $ml={4}>
              <SmallRow $gap={2}><PageIcon /><T w={29} s={10}>Layout</T><Caret $ml={2} /></SmallRow>
              <SmallRow $gap={2}><PageIcon c="#4b74bb" /><T w={24} s={10}>Reset</T></SmallRow>
              <SmallRow $gap={2}><PageIcon c="#98a2b0" star /><T w={33} s={10}>Section</T><Caret $ml={2} /></SmallRow>
            </SmallCol>
          </GroupBody>
          <GroupLabel><T w={25} ml={36} s={9.5} c="#8f9296">Slides</T></GroupLabel>
        </Group>
        <Group $w={199} $pl={6}>
          <GroupBody>
            <ToolCol $w={190}>
              <ToolRow $h={22}>
                <Combo $w={87}><T w={57} ml={1} s={10.5} c="#222">Calibri (Body)</T><Caret $ml={21} /></Combo>
                <Combo $w={35}><T w={10} ml={4} s={10.5} c="#222">24</T><Caret $ml={13} /></Combo>
                <Cell $w={22}><Glyph $w={11} $s={15} $b>A</Glyph><Caret $c="#3864ae" /></Cell>
                <Cell $w={20}><Glyph $w={9} $s={12} $b>A</Glyph><Caret $c="#3864ae" /></Cell>
                <Bar $h={15} />
                <Cell $w={25}><svg width="14" height="14" viewBox="0 0 14 14"><text x="0" y="8" fontSize="8" fontFamily="Liberation Serif" fill="#444">Aa</text><path d="M5 9l5-4 4 4-5 4z" fill="#d7dbe2" stroke="#7f8690" strokeWidth=".8" /></svg></Cell>
              </ToolRow>
              <ToolRow $h={24}>
                <Glyph $w={16} $s={12} $b>B</Glyph>
                <Glyph $w={21} $s={12} $i>I</Glyph>
                <Glyph $w={21} $s={12} $b $u>U</Glyph>
                <Glyph $w={20} $s={12} $b $sh>S</Glyph>
                <Glyph $w={22} $s={10} $b $strike>abc</Glyph>
                <Cell $w={19}><svg width="14" height="14" viewBox="0 0 14 14"><text x="0" y="8" fontSize="9.500" fontFamily="Liberation Serif" fill="#222">AV</text><path d="M0 11.500h13M2.500 9.500l-2 2 2 2M10.500 9.500l2 2-2 2" stroke="#3a67b5" fill="none" /></svg></Cell>
                <Caret />
                <Glyph $w={22} $s={12}>Aa</Glyph><Caret $ml={-2} />
                <Cell $w={8} /><Bar $h={15} />
                <Cell $w={24}><svg width="13" height="15" viewBox="0 0 13 15"><text x="1" y="11" fontSize="14" fontFamily="Liberation Serif" fill="#28529c">A</text><path d="M0 12h13v3H0z" fill="#1c5fb0" /></svg></Cell>
                <Caret />
              </ToolRow>
            </ToolCol>
          </GroupBody>
          <GroupLabel><T w={20} ml={75} s={9.5} c="#7d8085">Font</T><Launcher /></GroupLabel>
        </Group>
        <Group $w={260} $pl={4}>
          <GroupBody>
            <ToolCol $w={139}>
              <ToolRow $h={22}>
                <Cell $w={20}><ListIcon /></Cell><Caret />
                <Cell $w={4} /><Cell $w={29} $on><ListIcon /><Caret $ml={5} /></Cell>
                <Cell $w={4} /><Bar $h={14} />
                <Cell $w={20}><Lines k={2} c="#7b7f86" /></Cell>
                <Cell $w={18}><Lines k={2} c="#1e2f5c" /></Cell>
                <Cell $w={5} /><Bar $h={14} />
                <Cell $w={20}><ListIcon /></Cell><Caret />
              </ToolRow>
              <ToolRow $h={24}>
                <Cell $w={20} $on><Lines k={0} /></Cell>
                <Cell $w={20}><Lines k={1} /></Cell>
                <Cell $w={20}><Lines k={2} /></Cell>
                <Cell $w={20}><Lines k={3} /></Cell>
                <Cell $w={2} /><Bar $h={14} />
                <Cell $w={17}><svg width="12" height="10" viewBox="0 0 12 10" stroke="#333" strokeWidth="1.400"><path d="M0 1h5M0 3.700h5M0 6.400h5M0 9h5M7 1h5M7 3.700h5M7 6.400h5M7 9h5" /></svg></Cell>
                <Caret $ml={2} />
              </ToolRow>
            </ToolCol>
            <SmallCol>
              <SmallRow>
                <svg width="13" height="14" viewBox="0 0 13 14"><path d="M1 0v11M4 0v11M0 11h5" stroke="#333" /><text x="6" y="9" fontSize="9" fontWeight="700" fontFamily="Liberation Serif" fill="#234">A</text><path d="M6 11h7" stroke="#3864ae" /></svg>
                <T w={60} s={10}>Text Direction</T><Caret />
              </SmallRow>
              <SmallRow>
                <svg width="13" height="13" viewBox="0 0 13 13"><rect x="1" y="2" width="11" height="9" fill="#e8eef7" stroke="#7187ac" /><path d="M6.500 0v13M3 6.500h7" stroke="#3864ae" strokeWidth="1.300" /></svg>
                <T w={43} s={10}>Align Text</T><Caret />
              </SmallRow>
              <SmallRow>
                <svg width="13" height="13" viewBox="0 0 13 13"><path d="M0 1h8l3 3-3 3H0z" fill="#4da560" /><rect x="4" y="5" width="8" height="8" fill="#e7efe9" stroke="#698" /></svg>
                <T w={85} s={10}>Convert to SmartArt</T><Caret />
              </SmallRow>
            </SmallCol>
          </GroupBody>
          <GroupLabel><T w={45} ml={94} s={9.5} c="#7d8085">Paragraph</T><Launcher /></GroupLabel>
        </Group>
        <Group $w={295} $pl={6}>
          <GroupBody>
            <Gallery>
              <svg width="101" height="48" viewBox="0 0 101 48" fill="none" stroke="#4b5a78" strokeWidth="1">
                <rect x="1.500" y="2.500" width="12" height="10" fill="#d9e6f6" /><text x="3" y="10" fontSize="7" fontFamily="Liberation Serif" fill="#223" stroke="none">A</text><path d="M9 5.500h3M9 8h3M3 11h9" />
                <path d="M19 2.500l11 10M36 2.500l11 10M47 12.500l-4-.5 3.500-3.500z" />
                <rect x="53" y="3" width="13" height="9" fill="#e4ecf7" /><ellipse cx="76" cy="7.500" rx="6" ry="5" fill="#e4ecf7" /><rect x="87" y="3" width="13" height="9" rx="2.500" fill="#e4ecf7" />
                <path d="M8 19.500l5.500 10h-11zM19 19.500h6v9h7M36 19.500h6v9h6M48 28.500l-2-2v4zM53 22h6v-3l6 5.500-6 5.500v-3h-6zM73 18.500h6v6h3l-6 6-6-6h3zM89 22l5-3 2 3c-2 2 4 1 4 4l-1 3H88z" />
                <path d="M3 38l4-3 1 3-4 2 6 1-3 4 4 1M19 36c7 0 10 4 12 10M35 45c5-14 6-10 7-4s4 4 6 4M59 34c-4 0-2 5-5 6 3 1 1 6 5 6M72 34c4 0 2 5 5 6-3 1-1 6-5 6M94 34l1.500 4 4.500.5-3.500 3 1 4.500-3.500-2.500-3.500 2.500 1-4.500-3.500-3 4.500-.5z" />
              </svg>
              <GalleryScroll><Caret $c="#bbb" /><Caret /><Caret /></GalleryScroll>
            </Gallery>
            <Big $w={40} $ml={3}>
              <BigIcon>
                <svg width="26" height="27" viewBox="0 0 26 27"><rect x="6" y="5" width="15" height="15" fill="#f3cf45" stroke="#b79827" /><rect x=".5" y=".5" width="12" height="12" fill="#c3c6cb" stroke="#7c8086" /><rect x="14" y="14" width="11.500" height="12" fill="#c3c6cb" stroke="#7c8086" /></svg>
              </BigIcon>
              <BigRow><T w={35} s={10}>Arrange</T></BigRow>
              <BigRow><Caret /></BigRow>
            </Big>
            <Big $w={34} $ml={1}>
              <BigIcon>
                <svg width="26" height="27" viewBox="0 0 26 27"><rect x=".5" y=".5" width="24" height="24" rx="4" fill="url(#quickFill)" stroke="#62a87a" /><path d="M25 8L17 20l-6 5 2-6z" fill="#75807a" /></svg>
              </BigIcon>
              <BigRow><T w={25} s={10}>Quick</T></BigRow>
              <BigRow><T w={25} s={10}>Styles</T><Caret /></BigRow>
            </Big>
            <SmallCol $ml={3}>
              <SmallRow>
                <svg width="13" height="14" viewBox="0 0 13 14"><path d="M2 6l5-5 5 5-5 5z" fill="#dfe7f2" stroke="#456" /><path d="M0 11h13v3H0z" fill="#8fb8a9" /><path d="M12 5v5" stroke="#2d5ba8" strokeWidth="2" /></svg>
                <T w={41} s={10}>Shape Fill</T><Caret $ml={2} />
              </SmallRow>
              <SmallRow>
                <svg width="13" height="14" viewBox="0 0 13 14"><rect x="1" y="1" width="9" height="9" fill="#fff" stroke="#777" /><path d="M4 9l8-8" stroke="#caa23a" strokeWidth="2" /><path d="M0 11h13v3H0z" fill="#7b6a42" /></svg>
                <T w={62} s={10}>Shape Outline</T><Caret $ml={2} />
              </SmallRow>
              <SmallRow>
                <svg width="13" height="12" viewBox="0 0 13 12"><rect x="1" y="4" width="10" height="7" rx="2" fill="#6a8fd0" /><rect x="2" y="1" width="10" height="7" rx="2" fill="#f2f6fc" stroke="#92a6c6" /></svg>
                <T w={58} s={10}>Shape Effects</T><Caret $ml={2} />
              </SmallRow>
            </SmallCol>
          </GroupBody>
          <GroupLabel><T w={37} ml={115} s={9.5} c="#7d8085">Drawing</T><Launcher /></GroupLabel>
        </Group>
        <Group $w={72} $pl={8}>
          <GroupBody>
            <SmallCol>
              <SmallRow $gap={2}>
                <svg width="13" height="12" viewBox="0 0 13 12" fill="#2d508f"><path d="M2 1h3v4h3V1h3l2 10H8V7H5v4H0z" /></svg>
                <T w={20} s={10}>Find</T>
              </SmallRow>
              <SmallRow $gap={2}>
                <svg width="13" height="13" viewBox="0 0 13 13"><text x="0" y="6" fontSize="7" fontWeight="700" fontFamily="Liberation Sans" fill="#555">ab</text><text x="5" y="13" fontSize="7" fontWeight="700" fontFamily="Liberation Sans" fill="#2f8b4a">ac</text></svg>
                <T w={35} s={10}>Replace</T><Caret $ml={2} />
              </SmallRow>
              <SmallRow $gap={2}>
                <svg width="13" height="13" viewBox="0 0 13 13"><path d="M3 1v10l2.500-2.500L7 12.500l1.500-.7L7 8h3.500z" fill="#fff" stroke="#444" strokeWidth=".9" /></svg>
                <T w={27} s={10}>Select</T><Caret $ml={2} />
              </SmallRow>
            </SmallCol>
          </GroupBody>
          <GroupLabel><T w={31} ml={13} s={9.5} c="#7d8085">Editing</T></GroupLabel>
        </Group>
      </Ribbon>
    </>
  );
}

/* ---------- shared screen: slide panes ---------- */

const PptBody = styled.div`
  display: flex;
  height: 484px;
`;
const OutlinePane = styled.div`
  display: flex;
  flex-direction: column;
  width: 247px;
  background: #c5c3c7;
  border-right: 1px solid #8d8f93;
`;
const PaneTabs = styled.div`
  display: flex;
  align-items: center;
  height: 20px;
  background: linear-gradient(90deg, #c9cfd1, #b7bbbe);
  border-bottom: 1px solid #9b9ea2;
`;
const PaneTab = styled.div<{ $w: number; $on?: boolean }>`
  display: flex;
  width: ${(p) => p.$w}px;
  height: ${(p) => (p.$on ? 20 : 18)}px;
  padding-top: 2px;
  align-items: center;
  justify-content: center;
  background: ${(p) => (p.$on ? '#d3d8d9' : '#b2b5b8')};
  border-right: 1px solid #999ca0;
`;
const PaneContent = styled.div`
  display: flex;
  flex: 1;
`;
const ThumbList = styled.div`
  width: 232px;
  padding: 4px 1px 0 3px;
`;
const ThumbRow = styled.div<{ $on?: boolean; $mt: number; $pb: number }>`
  display: flex;
  margin-top: ${(p) => p.$mt}px;
  padding: ${(p) => (p.$on ? 5 : 3)}px 0 ${(p) => p.$pb}px 2px;
  ${(p) => p.$on && css`
    background: linear-gradient(90deg, #fdd98a, #fdf5b8 8%, #fbf7c4);
    box-shadow: inset 0 0 3px 1px #e3d66a;
  `}
`;
const ThumbNumber = styled.div`
  width: 15px;
  padding-top: 3px;
`;
const Thumb = styled.div`
  display: flex;
  width: 206px;
  height: 155px;
  border: 1px solid #7e7f78;
  background: linear-gradient(100deg, #e9eae8, #fff 20%, #fff 75%, #ecedea);
  box-shadow: 1px 1px 2px rgba(0, 0, 0, 0.35);
`;
const ThumbText = styled.div`
  width: 188px;
  padding-left: 13px;
  filter: blur(0.35px);
`;
const ThumbTitle = styled.div<{ $h: number }>`
  height: ${(p) => p.$h}px;
  padding-top: 13px;
`;
const ThumbLine = styled.div<{ $mt: number }>`
  height: 9.4px;
  margin-top: ${(p) => p.$mt}px;
`;
const ThumbBar = styled.div`
  display: flex;
  flex-direction: column;
  width: 16px;
  background: #5d6144;
`;
const ThumbBadge = styled.div`
  display: flex;
  height: 15px;
  margin-top: 123px;
  padding: 2px 1px;
  background: #a3a877;
  &::before {
    content: '';
    flex: 1;
    border-left: 1px solid #e8ebc8;
    border-right: 1px solid #e8ebc8;
  }
`;
const ScrollTrack = styled.div<{ $w: number; $pt?: number; $pb?: number }>`
  display: flex;
  flex-direction: column;
  align-items: center;
  width: ${(p) => p.$w}px;
  padding: ${(p) => p.$pt ?? 5}px 0 ${(p) => p.$pb ?? 6}px;
  background: #e0e0e5;
`;
const ArrowUp = styled.i<{ $c?: string; $s?: number }>`
  border: ${(p) => p.$s ?? 4}px solid transparent;
  border-top: 0;
  border-bottom: ${(p) => p.$s ?? 4}px solid ${(p) => p.$c ?? '#444'};
`;
const ArrowDown = styled.i<{ $c?: string; $s?: number; $mt?: number; $mb?: number }>`
  margin-top: ${(p) => p.$mt ?? 0}px;
  margin-bottom: ${(p) => p.$mb ?? 0}px;
  border: ${(p) => p.$s ?? 4}px solid transparent;
  border-bottom: 0;
  border-top: ${(p) => p.$s ?? 4}px solid ${(p) => p.$c ?? '#555'};
`;
const Knob = styled.div<{ $h: number }>`
  width: 11px;
  height: ${(p) => p.$h}px;
  margin: auto 0 6px;
  border: 1px solid #8a8d92;
  background: repeating-linear-gradient(#f4f4f6 0 3px, #a0a3a8 3px 4px) center / 7px 10px no-repeat, #f4f4f6;
`;
const Splitter = styled.div`
  width: 4px;
  background: #f1f2f4;
  border-right: 1px solid #8d8f93;
`;
const MainPane = styled.div`
  display: flex;
  flex-direction: column;
  width: 908px;
`;
const CanvasRow = styled.div`
  display: flex;
  height: 435px;
`;
const Canvas = styled.div`
  width: 894px;
  padding: 5px 0 0 4px;
  background: linear-gradient(#cdd5d6, #cdcfd1 9%, #c8c8ca 35%, #c4c5c7 60%, #b7c0bf 100%);
`;
const RulerRow = styled.div`
  display: flex;
  height: 42px;
`;
const TabStop = styled.div`
  display: flex;
  align-items: center;
  justify-content: center;
  width: 13px;
  height: 13px;
  margin: 1px 196px 0 0;
  background: #fff;
  border: 1px solid #8f9296;
  &::before {
    content: '';
    width: 5px;
    height: 5px;
    border-left: 2px solid #222;
    border-bottom: 2px solid #222;
  }
`;
const Ruler = styled.div`
  position: relative;
  display: flex;
  width: 491px;
  height: 14px;
  border: 1px solid #8f9296;
`;
const IndentMark = styled.div<{ $x: number; $y: number }>`
  position: absolute;
  left: ${(p) => p.$x}px;
  top: ${(p) => p.$y}px;
`;
const RulerPart = styled.div<{ $w: number; $on?: boolean; $pl?: number }>`
  display: flex;
  align-items: center;
  width: ${(p) => p.$w}px;
  padding-left: ${(p) => p.$pl ?? 0}px;
  border-right: 1px solid #8f9296;
  background: ${(p) => (p.$on ? '#fbfbfc' : '#c7cacc')};
  overflow: hidden;
`;
const RulerInch = styled.div`
  flex: none;
  width: 49.2px;
  height: 12px;
  font: 9px/12px ${SEG};
  color: #555;
  text-align: right;
  background: radial-gradient(circle, #777 0.7px, transparent 1px) 0 0 / 6.15px 12px repeat-x;
`;
const InchDigit = styled.span<{ $on?: boolean }>`
  display: inline-block;
  width: 9px;
  text-align: center;
  background: ${(p) => (p.$on ? '#fbfbfc' : '#c7cacc')};
`;
const SlideRow = styled.div`
  display: flex;
`;
const VRuler = styled.div`
  display: flex;
  flex-direction: column;
  width: 13px;
  height: 371px;
  margin-right: 196px;
  border: 1px solid #8f9296;
`;
const VPart = styled.div<{ $h: number; $on?: boolean; $pt?: number }>`
  display: flex;
  flex-direction: column;
  gap: 39px;
  align-items: center;
  height: ${(p) => p.$h}px;
  padding-top: ${(p) => p.$pt ?? 0}px;
  border-bottom: 1px solid #666;
  background:
    linear-gradient(#777, #777) center 24px / 5px 1px no-repeat,
    radial-gradient(circle, #777 0.7px, transparent 1px) 0 0 / 11px 6.1px,
    ${(p) => (p.$on ? '#fbfbfc' : '#c3c8c9')};
`;
const VDigit = styled.span`
  font: 9px/10px ${SEG};
  color: #555;
  transform: rotate(-90deg);
`;
const Slide = styled.div`
  position: relative;
  display: flex;
  width: 492px;
  height: 369px;
  background: radial-gradient(ellipse at 50% 45%, #fff 62%, #e6e7e5 100%);
  box-shadow: -2px 0 4px rgba(0, 0, 0, 0.35), 1px 3px 5px rgba(0, 0, 0, 0.45);
`;
const SlideMain = styled.div`
  width: 456px;
  padding-left: 24px;
`;
const SlideTitle = styled.div`
  height: 84px;
  padding: 29px 0 0 7px;
`;
const TextFrame = styled.div`
  position: relative;
  width: 411px;
  height: 261px;
  padding: 0 0 0 11px;
  border: 1px dashed #666;
`;
const Line = styled.div<{ $h: number; $pl?: number }>`
  display: flex;
  align-items: center;
  height: ${(p) => p.$h}px;
  padding-left: ${(p) => p.$pl ?? 0}px;
`;
const Marker = styled.div`
  width: 28px;
`;
const Selected = styled.div<{ $w: number; $c: string }>`
  display: flex;
  align-items: center;
  width: ${(p) => p.$w}px;
  height: 100%;
  background: ${(p) => p.$c};
`;
const Handle = styled.i<{ $x: number; $y: number; $round?: boolean; $green?: boolean }>`
  position: absolute;
  left: ${(p) => p.$x - 4}px;
  top: ${(p) => p.$y - 4}px;
  width: ${(p) => (p.$round ? 9 : 7)}px;
  height: ${(p) => (p.$round ? 9 : 7)}px;
  border: 1px solid ${(p) => (p.$green ? '#5b8a2c' : '#7d8287')};
  border-radius: ${(p) => (p.$round ? '50%' : '0')};
  background: ${(p) => (p.$green ? '#8cc63e' : '#fff')};
`;
const Stem = styled.i`
  position: absolute;
  left: 204px;
  top: -17px;
  height: 14px;
  border-left: 1px dashed #666;
`;
const Beam = styled.div`
  position: absolute;
  left: 133px;
  top: 238px;
`;
const HoverPill = styled.div`
  position: absolute;
  left: 50px;
  top: 144px;
  display: flex;
  align-items: center;
  gap: 24px;
  width: 131px;
  height: 42px;
  padding-left: 11px;
  border-radius: 21px;
  background: rgba(60, 60, 60, 0.06);
  color: rgba(255, 255, 255, 0.8);
`;
const SlideBar = styled.div`
  width: 36px;
  background: #5b6042;
`;
const SlideBadge = styled.div`
  display: flex;
  height: 36px;
  margin-top: 294px;
  padding: 9px 3px 5px 4px;
  background: #9ba270;
`;
const BadgeFrame = styled.div`
  display: flex;
  flex: 1;
  align-items: center;
  justify-content: center;
  border: 1px solid #e6e9c9;
  border-radius: 4px;
`;
const NotesDivider = styled.div`
  height: 6px;
  background: #f1f2f4;
  border-top: 1px solid #8d8f93;
  border-bottom: 1px solid #8d8f93;
`;
const Notes = styled.div`
  display: flex;
  height: 43px;
`;
const NotesText = styled.div`
  display: flex;
  align-items: center;
  width: 894px;
  height: 27px;
  padding-left: 9px;
`;
const Bullet = styled.i`
  width: 5px;
  height: 5px;
  margin-right: 11px;
  border-radius: 50%;
  background: #111;
`;

type TLine = [string, number, number, number, string?];
const blue = '#5c80ad';
const thumb7: TLine[] = [
  ['Study of architecture and instruction sets of MIPS', 2, 158, 0],
  ['architecture and simulator QtSpim.  Write the', 2, 144, 0.6],
  ['assembly language code for MIPS architecture', 2, 147, 0],
  ['Program for printing "Hello World" msg. like', 14, 142, 2.6],
  ['"Welcome to QtSpim"', 14, 70, 0],
  ['Program for adding and subtracting two', 14, 127, 1.6],
  ['numbers', 14, 27, 0.6],
  ['Program for adding and subtracting two', 14, 127, 1.6, blue],
  ['number where input is taken from user and', 14, 139, 0, blue],
  ['result should be displayed on Console', 14, 121, 0.6, blue],
];
const thumb8: TLine[] = [
  ['Study of Control structures and loops in  MIPS architecture.', 2, 163, 0],
  ['Write the assembly language code for MIPS architecture:', 2, 157, 0.6],
  ['Program for the following C-program', 14, 102, 1],
  ['If (a1<b1) then', 41, 41, 0],
  ['c1 = a1 + b1', 68, 31, 0.6],
  ['Program for taking two numbers from user and finding', 14, 151, 0],
  ['larger number among two numbers and print it on', 14, 141, -0.6],
  ['console.', 14, 21, -1],
  ['Program for taking three numbers from user and', 14, 135, -0.1, blue],
  ['finding largest number from three numbers and print', 14, 146, -1, blue],
  ['it on console.', 14, 36, -0.6, blue],
];
const ThumbSlide = ({ title, h, lines }: { title: string; h: number; lines: TLine[] }) => (
  <Thumb>
    <ThumbText>
      <ThumbTitle $h={h}><T w={75} s={12} f={SLAB} c="#666">{title}</T></ThumbTitle>
      {lines.map(([t, x, w, mt, c], i) => (
        <ThumbLine key={i} $mt={mt}><T w={w} ml={x} s={7} f={LAT} c={c ?? '#4a4a4a'}>{t}</T></ThumbLine>
      ))}
    </ThumbText>
    <ThumbBar><ThumbBadge /></ThumbBar>
  </Thumb>
);

const B = '#3c3c3c';
function PptPanes() {
  return (
    <PptBody>
      <OutlinePane>
        <PaneTabs>
          <PaneTab $w={52} $on><T w={26} s={10.5} c="#4a4d52">Slides</T></PaneTab>
          <PaneTab $w={55}><T w={34} s={10.5} c="#5a5d62">Outline</T></PaneTab>
          <WindowButtons $gap={0} $mr={5}><Cross size={7} color="#444" w={2.2} /></WindowButtons>
        </PaneTabs>
        <PaneContent>
          <ThumbList>
            <ThumbRow $mt={0} $pb={0}>
              <ThumbNumber><T w={12} s={10} b={600} c="#333">23</T></ThumbNumber>
              <ThumbSlide title="Practical No. 7" h={37} lines={thumb7} />
            </ThumbRow>
            <ThumbRow $mt={8} $pb={6} $on>
              <ThumbNumber><T w={12} s={10} b={600} c="#333">24</T></ThumbNumber>
              <ThumbSlide title="Practical No. 8" h={36} lines={thumb8} />
            </ThumbRow>
          </ThumbList>
          <ScrollTrack $w={14}><ArrowUp /><Knob $h={21} /><ArrowDown /></ScrollTrack>
        </PaneContent>
      </OutlinePane>
      <Splitter />
      <MainPane>
        <CanvasRow>
          <Canvas>
            <RulerRow>
              <TabStop />
              <Ruler>
                <RulerPart $w={29}><RulerInch /></RulerPart>
                <RulerPart $w={399} $on $pl={3}>
                  {[1, 2, 3, 4, 5, 6, 7, 8].map((n) => <RulerInch key={n}><InchDigit $on>{n}</InchDigit></RulerInch>)}
                </RulerPart>
                <RulerPart $w={62}><RulerInch><InchDigit>9</InchDigit></RulerInch></RulerPart>
                <IndentMark $x={31} $y={-2}><svg width="8" height="6" viewBox="0 0 8 6" fill="#f4f4f6" stroke="#666"><path d="M.5.5h7L4 5.500z" /></svg></IndentMark>
                <IndentMark $x={59} $y={7}><svg width="8" height="11" viewBox="0 0 8 11" fill="#ddd" stroke="#666"><path d="M4 .5L7.500 4v6.500h-7V4zM.5 6.500h7" /></svg></IndentMark>
              </Ruler>
            </RulerRow>
            <SlideRow>
              <VRuler>
                <VPart $h={87} $pt={5}><VDigit>2</VDigit><VDigit>1</VDigit></VPart>
                <VPart $h={241} $on $pt={45}>{[1, 2, 3, 4].map((n) => <VDigit key={n}>{n}</VDigit>)}</VPart>
                <VPart $h={41} $pt={4}><VDigit>5</VDigit></VPart>
              </VRuler>
              <Slide>
                <SlideMain>
                  <SlideTitle><T w={181} s={28} f={SLAB} c="#666">Practical  No. 8</T></SlideTitle>
                  <TextFrame>
                    <Line $h={24}><T w={390} s={16} f={LAT} c={B}>Study of Control structures and loops in  MIPS architecture.</T></Line>
                    <Line $h={24}><T w={376} s={16} f={LAT} c={B}>Write the assembly language code for MIPS architecture:</T></Line>
                    <Line $h={24}><Marker><T w={7} s={14} f={LAT} c="#999">i.</T></Marker><T w={244} s={16} f={LAT} c={B}>Program for the following C-program</T></Line>
                    <Line $h={23} $pl={93}><T w={97} s={16} f={LAT} c={B}>If (a1&lt;b1) then</T></Line>
                    <Line $h={23} $pl={151}><T w={79} s={16} f={LAT} c={B}>c1 = a1 + b1</T></Line>
                    <Line $h={23}><Marker><T w={7} s={14} f={LAT} c="#999">i.</T></Marker><T w={361} s={16} f={LAT} c={B}>Program for taking two numbers from user and finding</T></Line>
                    <Line $h={19}><Marker /><T w={335} s={16} f={LAT} c={B}>larger number among two numbers and print it on</T></Line>
                    <Line $h={20}><Marker /><T w={53} s={16} f={LAT} c={B}>console.</T></Line>
                    <Line $h={25}><Marker><T w={10} s={14} f={LAT} c="#999">ii.</T></Marker><Selected $w={331} $c="#afc6dd"><T w={321} s={16} f={LAT} c="#3f78b4">Program for taking three numbers from user and</T></Selected></Line>
                    <Line $h={19}><Marker /><Selected $w={357} $c="#b9c4dc"><T w={353} s={16} f={LAT} c="#3f78b4">finding largest number from three numbers and print</T></Selected></Line>
                    <Line $h={19}><Marker /><Selected $w={92} $c="#b7c5dc"><T w={88} s={16} f={LAT} c="#2f6fb4">it on console.</T></Selected></Line>
                    <Stem />
                    <Handle $x={204} $y={-21} $round $green />
                    <Handle $x={-1} $y={0} $round /><Handle $x={409} $y={0} $round />
                    <Handle $x={-1} $y={259} $round /><Handle $x={205} $y={0} /><Handle $x={205} $y={259} />
                    <Handle $x={0} $y={130} /><Handle $x={410} $y={130} />
                    <Beam><svg width="8" height="14" viewBox="0 0 8 14" stroke="#222" fill="none"><path d="M1 .5h2l1 1 1-1h2M4 1v12M1 13.500h2l1-1 1 1h2" /></svg></Beam>
                  </TextFrame>
                </SlideMain>
                <SlideBar><SlideBadge><BadgeFrame><T w={13} s={12} c="#e9ecd0">24</T></BadgeFrame></SlideBadge></SlideBar>
                <HoverPill>
                  <MdOutlinePushPin size={23} /><MdMicOff size={20} opacity={0.35} />
                </HoverPill>
              </Slide>
            </SlideRow>
          </Canvas>
          <ScrollTrack $w={14} $pt={32} $pb={14}>
            <ArrowUp $s={3} /><Knob $h={17} />
            <ArrowDown $mb={7} /><ArrowUp /><ArrowUp /><ArrowDown $mt={5} /><ArrowDown />
          </ScrollTrack>
        </CanvasRow>
        <NotesDivider />
        <Notes>
          <NotesText><Bullet /><T w={106} s={14} f={SEG} c="#1b1b1b">Click to add notes</T></NotesText>
          <ScrollTrack $w={14}><ArrowUp $s={3} $c="#999" /><ArrowDown $s={3} $mt={22} $c="#999" /></ScrollTrack>
        </Notes>
      </MainPane>
    </PptBody>
  );
}

/* ---------- shared screen: bottom ---------- */

const StatusBar = styled.div`
  display: flex;
  align-items: center;
  height: 19px;
  padding-left: 7px;
  background: linear-gradient(#dcdde0, #c0c3c6);
  border-top: 1px solid #a9abae;
`;
const StatusSep = styled.i<{ $ml: number; $mr: number }>`
  width: 1px;
  height: 18px;
  margin: 0 ${(p) => p.$mr}px 0 ${(p) => p.$ml}px;
  background: #9b9ea2;
`;
const StatusRight = styled.div`
  display: flex;
  align-items: center;
  gap: 7px;
  margin-left: auto;
  padding-right: 4px;
`;
const ViewButton = styled.i<{ $on?: boolean }>`
  width: ${(p) => (p.$on ? 15 : 9)}px;
  height: ${(p) => (p.$on ? 15 : 8)}px;
  border: 1px solid ${(p) => (p.$on ? '#c9a227' : '#5d6166')};
  background: ${(p) => (p.$on
    ? 'linear-gradient(90deg, #f7dd64 20%, #555 20% 30%, #fff 30% 45%, #555 45% 55%, #fff 55% 70%, #555 70% 80%, #f7dd64 80%)'
    : 'linear-gradient(90deg, #e9eaec 40%, #777 40% 55%, #e9eaec 55%)')};
`;
const RemoteTaskbar = styled.div`
  display: flex;
  height: 33px;
  background: linear-gradient(90deg, #414346 0, #464648 57%, #1c2d44 66%, #182739);
`;
const RemoteStart = styled.div`
  display: flex;
  width: 41px;
  align-items: center;
  justify-content: center;
  background: #3a4043;
`;
const RemoteSearch = styled.div`
  display: flex;
  width: 293px;
  align-items: center;
  padding-left: 10px;
  background: #f3f2f5;
`;
const RemoteApp = styled.div<{ $on?: boolean; $line?: boolean }>`
  display: flex;
  width: 41.6px;
  align-items: center;
  justify-content: center;
  background: ${(p) => (p.$on ? '#66686b' : 'transparent')};
  border-bottom: 2px solid ${(p) => (p.$line ? '#6ba3d0' : 'transparent')};
`;
const RemoteTray = styled.div`
  display: flex;
  align-items: center;
  gap: 8px;
  margin-left: auto;
`;
const Clock = styled.div<{ $gap: number; $ml?: number }>`
  display: flex;
  flex-direction: column;
  align-items: center;
  gap: ${(p) => p.$gap}px;
  margin-left: ${(p) => p.$ml ?? 0}px;
`;
const Notifier = styled.div<{ $ml: number; $mr: number }>`
  position: relative;
  margin: 0 ${(p) => p.$mr}px 0 ${(p) => p.$ml}px;
`;
const CountBadge = styled.span<{ $s: number; $x: number; $y: number }>`
  position: absolute;
  left: ${(p) => p.$x}px;
  top: ${(p) => p.$y}px;
  width: ${(p) => p.$s}px;
  height: ${(p) => p.$s}px;
  border: 1px solid #8c8c8c;
  border-radius: 50%;
  background: #3b3b3d;
  color: #fff;
  font: 600 ${(p) => p.$s * 0.62}px/${(p) => p.$s - 2}px ${SEG};
  text-align: center;
`;
const ShareBar = styled.div`
  position: absolute;
  left: 412px;
  top: 573px;
  display: flex;
  align-items: center;
  width: 336px;
  height: 36px;
  padding-left: 12px;
  border-top: 1px solid #d5d5d8;
  background: #fff;
  box-shadow: 0 1px 3px rgba(0, 0, 0, 0.4);
`;
const Grip = styled.i`
  width: 4px;
  height: 11px;
  border-left: 1px dotted #999;
  border-right: 1px dotted #999;
`;
const StopButton = styled.div`
  display: flex;
  align-items: center;
  justify-content: center;
  width: 86px;
  height: 27px;
  margin: 0 9px 0 9px;
  border-radius: 3px;
  background: #1a73e8;
`;
const Toast = styled.div`
  position: absolute;
  left: 837px;
  top: 486px;
  display: flex;
  width: 308px;
  height: 121px;
  padding: 18px 0 0 14px;
  background: #363636;
`;
const ToastLogo = styled.div`
  display: flex;
  align-items: center;
  justify-content: center;
  width: 38px;
  height: 38px;
  margin: 4px 15px 0 0;
  border-radius: 50%;
  background: #fff;
`;
const ToastText = styled.div`
  display: flex;
  flex-direction: column;
`;
const ToastLine = styled.div<{ $h?: number }>`
  display: flex;
  align-items: center;
  height: ${(p) => p.$h ?? 17}px;
`;

const Chrome = () => (
  <svg width="18" height="18" viewBox="0 0 18 18">
    <circle cx="9" cy="9" r="9" fill="#fbc116" />
    <path d="M9 9L1.200 4.500A9 9 0 0116.800 4.500z" fill="#e33b2e" />
    <path d="M9 9L1.200 4.500A9 9 0 009 18l4-7z" fill="#2da94f" />
    <circle cx="9" cy="9" r="4.300" fill="#fff" /><circle cx="9" cy="9" r="3.300" fill="#4285f4" />
  </svg>
);

function RemoteBottom() {
  return (
    <>
      <StatusBar>
        <T w={58} s={9.5} c="#4c4f53">Slide 24 of 24</T><StatusSep $ml={8} $mr={8} />
        <T w={50} s={9.5} c="#4c4f53">"Adjacency"</T><StatusSep $ml={8} $mr={7} />
        <svg width="14" height="12" viewBox="0 0 14 12"><path d="M1 4l5-2 6 3-3 7H4z" fill="#dfe3ee" stroke="#6c7cae" /><path d="M6 1l6 5M12 1L7 6" stroke="#cc3b33" strokeWidth="1.600" /></svg>
        <StatusSep $ml={8} $mr={0} />
        <StatusRight>
          <ViewButton $on /><ViewButton /><ViewButton /><ViewButton />
          <T w={19} s={9} c="#444">80%</T>
          <svg width="106" height="12" viewBox="0 0 106 12" stroke="#666" fill="#eee"><path d="M14 6h78" /><circle cx="6" cy="6" r="5" /><path d="M3 6h6" /><path d="M36 2h6v6l-3 3-3-3z" /><circle cx="99" cy="6" r="5" /><path d="M96 6h6M99 3v6" /></svg>
          <ViewButton />
        </StatusRight>
      </StatusBar>
      <RemoteTaskbar>
        <RemoteStart><FaWindows size={14} color="#fff" /></RemoteStart>
        <RemoteSearch><Search size={14} /><T w={109} ml={10} s={12.5} c="#3c3c40">Type here to search</T></RemoteSearch>
        <RemoteApp $line><Folder size={19} /></RemoteApp>
        <RemoteApp><Edge size={20} /></RemoteApp>
        <RemoteApp $line><Chrome /></RemoteApp>
        <RemoteApp><Store size={20} /></RemoteApp>
        <RemoteApp><svg width="21" height="18" viewBox="0 0 21 18"><path d="M0 6l10.500-6L21 6v12H0z" fill="#1683d8" /><path d="M1 6h19l-9.500 7z" fill="#e9f5fd" /><path d="M0 6l10.500 7L21 6v12H0z" fill="#2fa4ef" opacity=".8" /></svg></RemoteApp>
        <RemoteApp $line><svg width="17" height="18" viewBox="0 0 17 18"><path d="M4 1l12 1-4 15L0 15z" fill="#8cc5c4" /><path d="M5 3l9 1-3 10-8-1z" fill="#b9dfdc" /></svg></RemoteApp>
        <RemoteApp $line><Computer size={19} /></RemoteApp>
        <RemoteApp $on $line><svg width="19" height="18" viewBox="0 0 19 18"><rect width="19" height="18" rx="2" fill="#f6e2d6" /><rect width="15" height="17" fill="#d8532a" /><path d="M4 13V4h4c4 0 4 5 0 5H4" stroke="#fff" strokeWidth="2" fill="none" /></svg></RemoteApp>
        <RemoteApp $line><svg width="18" height="18" viewBox="0 0 18 18"><rect width="18" height="18" rx="3" fill="#b30b00" /><path d="M3.500 14c2-3 6-5 11-4-4-1-6-4-5.500-7.500 1 4-2 9-5.500 11.500z" fill="none" stroke="#fff" strokeWidth="1.400" /></svg></RemoteApp>
        <RemoteTray>
          <Chevron size={11} /><Battery size={14} />
          <svg width="8" height="14" viewBox="0 0 8 14" fill="#fff"><rect x="1.500" width="5" height="9" rx="2" /><path d="M0 6c0 6 8 6 8 0v4H5v3H3v-3H0z" /></svg>
          <Speaker size={14} />
          <Clock $gap={1} $ml={2}><T w={36} s={10.5} c="#fff">1:09 PM</T><T w={50} s={10.5} c="#fff">17/10/2020</T></Clock>
          <Notifier $ml={7} $mr={20}><Note size={14} /><CountBadge $s={14} $x={7} $y={5}>5</CountBadge></Notifier>
        </RemoteTray>
      </RemoteTaskbar>
      <ShareBar>
        <Grip />
        <T w={180} ml={7} s={11.5} c="#3a3a3d">meet.google.com is sharing your screen.</T>
        <StopButton><T w={58} s={11} b={600} c="#fff">Stop sharing</T></StopButton>
        <T w={21} s={11} c="#3b78d8">Hide</T>
      </ShareBar>
      <Toast>
        <ToastLogo>
          <svg width="24" height="20" viewBox="0 0 24 20"><path d="M0 6l6-6v20H3c-2 0-3-1-3-3z" fill="#1a66e0" /><path d="M6 0h9c2 0 3 1 3 2.500V8l-4-2H6z" fill="#fbb30a" /><path d="M0 6l6-6v6z" fill="#e8402f" /><path d="M6 14h8V8l10-6v16l-6-4v3c0 2-1 3-3 3H6z" fill="#12a150" /></svg>
        </ToastLogo>
        <ToastText>
          <ToastLine><T w={173} s={12.5} b={600} c="#fff">You're presenting to everyone</T></ToastLine>
          <ToastLine><T w={201} s={12.5} c="#b3b3b3">Click here to return to the video call</T></ToastLine>
          <ToastLine><T w={147} s={12.5} c="#b3b3b3">when you're ready to stop</T></ToastLine>
          <ToastLine><T w={60} s={12.5} c="#b3b3b3">presenting</T></ToastLine>
          <ToastLine $h={22}><T w={160} s={10.5} c="#a6a6a6">Google Chrome • meet.google.com</T></ToastLine>
        </ToastText>
      </Toast>
    </>
  );
}

/* ---------- meeting stage ---------- */

const Main = styled.div`
  display: flex;
  height: 938px;
`;
const LeftSide = styled.div`
  display: flex;
  flex-direction: column;
  width: 1560px;
`;
const Stage = styled.div`
  display: flex;
  flex-direction: column;
  height: 850px;
  overflow: hidden;
  background: #111;
`;
const StageHead = styled.div`
  display: flex;
  flex: none;
  align-items: center;
  height: 48px;
  padding-left: 6px;
`;
const RecBadge = styled.div`
  display: flex;
  align-items: center;
  width: 73px;
  height: 36px;
  padding-left: 11px;
  border-radius: 4px;
  background: #b12b25;
`;
const RecDot = styled.i`
  width: 14px;
  height: 14px;
  border-radius: 50%;
  background: #fff;
`;
const Avatar = styled.div<{ $d: number; $c: string; $s: number; $halo?: boolean }>`
  display: flex;
  flex: none;
  align-items: center;
  justify-content: center;
  width: ${(p) => p.$d}px;
  height: ${(p) => p.$d}px;
  border-radius: 50%;
  background: ${(p) => p.$c};
  color: #fff;
  font: 400 ${(p) => p.$s}px/1 ${ROB};
  box-shadow: ${(p) => (p.$halo ? '0 0 0 10px #424346' : 'none')};
`;
const HeadAvatar = styled.div`
  margin: 0 16px 0 22px;
`;
const TileRow = styled.div<{ $w: number; $ml: number; $h: number }>`
  display: flex;
  flex: none;
  width: ${(p) => p.$w}px;
  height: ${(p) => p.$h}px;
  margin-left: ${(p) => p.$ml}px;
  background: #202124;
`;
const Tile = styled.div<{ $pt: number }>`
  display: flex;
  flex-direction: column;
  flex: 1;
  align-items: center;
  padding-top: ${(p) => p.$pt}px;
  padding-right: 2px;
`;
const TileName = styled.div`
  display: flex;
  align-items: center;
  align-self: stretch;
  height: 26px;
  margin-top: -10px;
  padding-left: 8px;
  text-shadow: 0 1px 2px rgba(0, 0, 0, 0.6);
  z-index: 1;
`;
const MuteDot = styled.div`
  display: flex;
  align-items: center;
  justify-content: center;
  width: 26px;
  height: 26px;
  margin-right: 8px;
  border-radius: 50%;
  background: #d93025;
`;
const Talking = styled.div`
  display: flex;
  align-items: center;
  justify-content: center;
  gap: 2px;
  width: 26px;
  margin-right: 8px;
`;
const Pulse = styled.i<{ $h: number }>`
  width: 4px;
  height: ${(p) => p.$h}px;
  border-radius: 2px;
  background: #64ffda;
`;

const people = [
  { n: 'You', w: 24, l: 'T', c: '#c2185b' },
  { n: 'Jignyasa B Sanghavi', w: 128, l: 'J', c: '#f4511e', live: true },
  { n: 'Shridhar Ajit Ashtikar', w: 131, l: 'S', c: '#689f38' },
  { n: 'Shreya Chandra Charu Rai', w: 162, l: 'S', c: '#01579b' },
  { n: 'Rachita B', w: 59, l: 'R', c: '#ab47bc' },
];

const BottomBar = styled.div`
  display: flex;
  align-items: center;
  height: 88px;
  padding-left: 24px;
  background: #fff;
`;
const DetailsToggle = styled.div`
  display: flex;
  align-items: center;
  gap: 7px;
  width: 656px;
`;
const CallButtons = styled.div`
  display: flex;
  gap: 16px;
  width: 535px;
`;
const RoundButton = styled.div<{ $plain?: boolean }>`
  display: flex;
  align-items: center;
  justify-content: center;
  width: 56px;
  height: 56px;
  border-radius: 50%;
  background: ${(p) => (p.$plain ? '#fff' : '#d93025')};
  border: ${(p) => (p.$plain ? '1px solid #dadce0' : '0')};
`;
const BarAction = styled.div<{ $ml?: number; $gap: number; $mt?: number }>`
  display: flex;
  flex-direction: column;
  align-items: center;
  gap: ${(p) => p.$gap}px;
  margin-left: ${(p) => p.$ml ?? 0}px;
  margin-top: ${(p) => p.$mt ?? 0}px;
`;
const TwoLines = styled.div`
  display: flex;
  flex-direction: column;
  align-items: center;
`;
const More = styled.div`
  margin-left: 32px;
`;

function MeetingStage() {
  return (
    <LeftSide>
      <Stage>
        <StageHead>
          <RecBadge><RecDot /><T w={30} ml={7} s={16} f={ROB} b={500} c="#fff">REC</T></RecBadge>
          <HeadAvatar><Avatar $d={36} $c="#f4511e" $s={18}>J</Avatar></HeadAvatar>
          <T w={272} s={17.5} f={ROB} c="#fff">Jignyasa B Sanghavi is presenting</T>
        </StageHead>
        <Shared>
          <PptRibbon />
          <PptPanes />
          <RemoteBottom />
        </Shared>
        <TileRow $w={1187} $ml={187} $h={119}>
          {people.map((p) => (
            <Tile key={p.n} $pt={24}>
              <Avatar $d={72} $c={p.c} $s={36} $halo={p.live}>{p.l}</Avatar>
              <TileName>
                {p.live
                  ? <Talking><Pulse $h={8} /><Pulse $h={14} /><Pulse $h={8} /></Talking>
                  : <MuteDot><MdMicOff size={17} color="#fff" /></MuteDot>}
                <T w={p.w} s={14} f={ROB} c="#fff">{p.n}</T>
              </TileName>
            </Tile>
          ))}
        </TileRow>
        <TileRow $w={949} $ml={306} $h={119}>
          {['#512da8', '#512da8', '#5d4037', '#ec407a'].map((c, i) => (
            <Tile key={i} $pt={24}><Avatar $d={72} $c={c} $s={36} /></Tile>
          ))}
        </TileRow>
      </Stage>
      <BottomBar>
        <DetailsToggle>
          <T w={125} s={18} f={ROB} c="#202124">Meeting details</T>
          <MdKeyboardArrowUp size={24} color="#5f6368" />
        </DetailsToggle>
        <CallButtons>
          <RoundButton><MdOutlineMicOff size={24} color="#fff" /></RoundButton>
          <RoundButton $plain><MdCallEnd size={25} color="#d93025" /></RoundButton>
          <RoundButton><MdOutlineVideocamOff size={25} color="#fff" /></RoundButton>
        </CallButtons>
        <BarAction $gap={8} $mt={1}>
          <svg width="18" height="16" viewBox="0 0 18 16" fill="none" stroke="#5f6c7b"><rect x="1" y="1" width="16" height="14" rx="1" strokeWidth="2" /><path d="M8 6H5v4h3M14 6h-3v4h3" strokeWidth="1.500" /></svg>
          <T w={104} s={14} f={ROB} c="#3c4043" b={500}>Turn on captions</T>
        </BarAction>
        <BarAction $ml={46} $gap={7} $mt={-1}>
          <svg width="22" height="18" viewBox="0 0 22 18" fill="none" stroke="#00796b"><rect x="1" y="1" width="20" height="16" rx="1" strokeWidth="2" /><path d="M11 13V6M7.500 8.500L11 5l3.500 3.500" strokeWidth="2" /></svg>
          <TwoLines>
            <T w={122} s={14} lh={1.3} f={ROB} c="#3c4043" b={500}>Jignyasa B Sanghavi</T>
            <T w={79} s={14} lh={1.3} f={ROB} c="#3c4043" b={500}>is presenting</T>
          </TwoLines>
        </BarAction>
        <More><MdMoreVert size={24} color="#3c4043" /></More>
      </BottomBar>
    </LeftSide>
  );
}

/* ---------- chat side panel ---------- */

const SidePanel = styled.div`
  display: flex;
  flex-direction: column;
  width: 360px;
  background: #fff;
  border-left: 1px solid #e0e0e0;
`;
const SideHead = styled.div`
  display: flex;
  align-items: center;
  justify-content: space-between;
  height: 64px;
  padding: 0 21px 0 23px;
`;
const SideTabs = styled.div`
  display: flex;
  height: 51px;
  border-bottom: 1px solid #e8eaed;
`;
const SideTab = styled.div<{ $w: number; $pl: number }>`
  display: flex;
  width: ${(p) => p.$w}px;
  flex-direction: column;
  justify-content: space-between;
  padding: 13px 0 0 ${(p) => p.$pl}px;
`;
const TabLabel = styled.div`
  display: flex;
  align-items: center;
  height: 24px;
`;
const TabLine = styled.div`
  width: 57px;
  height: 3px;
  margin-left: 3px;
  border-radius: 3px 3px 0 0;
  background: #00796b;
`;
const ChatArea = styled.div`
  display: flex;
  height: 751px;
`;
const ChatLog = styled.div`
  display: flex;
  flex-direction: column;
  gap: 27px;
  width: 339px;
  padding: 22px 0 0 23px;
`;
const Message = styled.div`
  display: flex;
  flex-direction: column;
`;
const MessageRow = styled.div<{ $mt?: number }>`
  display: flex;
  align-items: center;
  height: 20px;
  margin-top: ${(p) => p.$mt ?? 0}px;
`;
const ChatScroll = styled.div`
  display: flex;
  flex-direction: column;
  align-items: center;
  width: 20px;
  padding: 7px 0 8px;
  background: #f0f0f0;
`;
const ChatThumb = styled.div`
  width: 19px;
  height: 520px;
  margin: auto 0 8px 0;
  background: #cdcdcd;
`;
const Flipped = styled.div`
  transform: rotate(180deg);
`;
const Composer = styled.div`
  display: flex;
  align-items: center;
  flex: 1;
  padding: 0 28px 0 19px;
  border-top: 1px solid #e8eaed;
`;
const ComposerField = styled.div`
  width: 268px;
  height: 24px;
  margin: 9px 27px 0 0;
  border-bottom: 1px solid #e3e5e8;
`;

type Msg = { n: string; nw: number; t: string; l: [string, number, number][] };
const log: Msg[] = [
  { n: 'SOHAM VIJAY MUNDHADA', nw: 160, t: '12:35 PM', l: [['yes', 19, 0]] },
  { n: 'Varun Ashok Kalbhore', nw: 129, t: '12:41 PM', l: [['please show execution again', 166, 0], ['load and exexution', 108, 10]] },
  { n: 'Varun Ashok Kalbhore', nw: 129, t: '12:43 PM', l: [['ok clear maam', 85, 0]] },
  { n: 'Navya Mukul Verma', nw: 116, t: '12:50 PM', l: [["Ma'am , so it will be t1+3; t1+t2 and similarly t2-t1", 283, 0], ['and not t1-t2!?', 83, 0], ["ok ma'am", 55, 10]] },
  { n: 'SAYANDEEP GHOSH', nw: 119, t: '12:51 PM', l: [['Will it show any output at console?', 200, 0]] },
  { n: 'SAYANDEEP GHOSH', nw: 119, t: '12:59 PM', l: [["Ok ma'am", 58, 0]] },
  { n: 'DEEP GIRISH PATIDAR', nw: 131, t: '1:01 PM', l: [['.', 3, 0], ['.no maam that was a mistake', 171, 10]] },
  { n: 'Chinmay RAMKRISHNA GUMGAONKAR', nw: 230, t: '1:09 PM', l: [['why .text', 51, 0]] },
  { n: 'Ashtavinayak Laxminarayan Pande', nw: 202, t: '1:09 PM', l: [["Ma'am can you share the tutorial file on classroom", 290, 0], ['Yes', 21, 10]] },
];

function Chat() {
  return (
    <SidePanel>
      <SideHead>
        <T w={124} s={18} f={ROB} c="#202124">Meeting details</T>
        <Cross size={14} color="#5f6368" w={1.9} />
      </SideHead>
      <SideTabs>
        <SideTab $w={180} $pl={36}>
          <TabLabel><MdOutlinePeopleAlt size={24} color="#5f6368" /><T w={75} ml={5} s={15} f={ROB} b={500} c="#5f6368">People (58)</T></TabLabel>
        </SideTab>
        <SideTab $w={179} $pl={58}>
          <TabLabel><MdChatBubble size={24} color="#00796b" /><T w={32} ml={6} s={15} f={ROB} b={500} c="#00796b">Chat</T></TabLabel>
          <TabLine />
        </SideTab>
      </SideTabs>
      <ChatArea>
        <ChatLog>
          {log.map((m, i) => (
            <Message key={i}>
              <MessageRow>
                <T w={m.nw} s={13} f={ROB} b={500} c="#202124">{m.n}</T>
                <T w={m.t.length === 8 ? 51 : 44} ml={8} s={13} f={ROB} c="#5f6368">{m.t}</T>
              </MessageRow>
              {m.l.map(([t, w, mt]) => <MessageRow key={t} $mt={mt}><T w={w} s={13} f={ROB} c="#202124">{t}</T></MessageRow>)}
            </Message>
          ))}
        </ChatLog>
        <ChatScroll>
          <Chevron size={10} color="#505050" />
          <ChatThumb />
          <Flipped><Chevron size={10} color="#505050" /></Flipped>
        </ChatScroll>
      </ChatArea>
      <Composer>
        <ComposerField><T w={166} s={13.5} f={ROB} c="#9a9da1">Send a message to everyone</T></ComposerField>
        <svg width="19" height="18" viewBox="0 0 19 18" fill="none" stroke="#d5d7da" strokeWidth="2"><path d="M1 1.500L17 9 1 16.500zM1 9h8" /></svg>
      </Composer>
    </SidePanel>
  );
}

/* ---------- local taskbar ---------- */

const Taskbar = styled.div`
  display: flex;
  height: 50px;
  background: #1c1c1c;
`;
const StartButton = styled.div`
  display: flex;
  width: 60px;
  align-items: center;
  justify-content: center;
`;
const SearchBox = styled.div`
  display: flex;
  align-items: center;
  width: 430px;
  padding: 2px 0 0 14px;
  border: 1px solid #bdbdbd;
  background: #f2f2f2;
`;
const Apps = styled.div`
  display: flex;
  margin-left: -1px;
`;
const TaskApp = styled.div<{ $on?: boolean; $line?: boolean }>`
  position: relative;
  display: flex;
  width: 62px;
  align-items: center;
  justify-content: center;
  background: ${(p) => (p.$on ? '#4b4b4b' : 'transparent')};
  &::after {
    content: '';
    display: ${(p) => (p.$on || p.$line ? 'block' : 'none')};
    position: absolute;
    left: ${(p) => (p.$on ? 0 : 5)}px;
    right: ${(p) => (p.$on ? 0 : 5)}px;
    bottom: 0;
    height: 3px;
    background: #b1b1ad;
  }
`;
const Tray = styled.div`
  display: flex;
  align-items: center;
  margin-left: auto;
`;
const TraySlot = styled.div<{ $w: number }>`
  display: flex;
  justify-content: center;
  width: ${(p) => p.$w}px;
`;

function LocalTaskbar() {
  return (
    <Taskbar>
      <StartButton>
        <svg width="20" height="20" viewBox="0 0 20 20" fill="#fff"><path d="M0 3l8.500-1.300v7.800H0zM9.500 1.500L20 0v9.500H9.500zM0 10.500h8.500v7.800L0 17zM9.500 10.500H20V20L9.500 18.500z" /></svg>
      </StartButton>
      <SearchBox><Search size={20} /><T w={163} ml={15} s={18} c="#2b2b2b">Type here to search</T></SearchBox>
      <Apps>
        <TaskApp><svg width="20" height="20" viewBox="0 0 20 20"><circle cx="10" cy="10" r="8.500" fill="none" stroke="#fff" strokeWidth="2.300" /></svg></TaskApp>
        <TaskApp><svg width="20" height="20" viewBox="0 0 20 20" fill="none" stroke="#e6e6e6" strokeWidth="1.300"><path d="M-1 1v3.500h12V1M-1 19v-3.500h12V19M-1 7.500h12v5H-1zM16 0v5M16 10v10" /><path d="M14.500 6h3v3h-3z" fill="#fff" /></svg></TaskApp>
        <TaskApp><Store size={30} /></TaskApp>
        <TaskApp>
          <svg width="32" height="24" viewBox="0 0 32 24"><path d="M0 8L16 0l16 8v16H0z" fill="#fff" /><path d="M0 8.500l16 8 16-8" stroke="#1c1c1c" strokeWidth="2" fill="none" /></svg>
          <CountBadge $s={22} $x={34} $y={24}>91</CountBadge>
        </TaskApp>
        <TaskApp><Edge size={31} /></TaskApp>
        <TaskApp><svg width="27" height="20" viewBox="0 0 27 20"><path d="M10 0h17l-10 10 10 10H10L0 10z" fill="#f2441d" /><path d="M17 10l10 10H10z" fill="#d92f1c" /></svg></TaskApp>
        <TaskApp $on><Firefox size={29} /></TaskApp>
        <TaskApp><Folder size={29} /></TaskApp>
        <TaskApp $line><svg width="28" height="30" viewBox="0 0 28 30"><path d="M1 1l12 .5v12.500L1 15z" fill="#cf2a20" /><path d="M15 1.500L27 1v12H15z" fill="#54b52c" /><path d="M2 17l11-1v12L2 29z" fill="#c0a522" /><path d="M15 15.500h12V28l-12-1z" fill="#4a21b0" /></svg></TaskApp>
        <TaskApp $line><Edge size={31} /></TaskApp>
        <TaskApp $line><Computer size={26} /></TaskApp>
      </Apps>
      <Tray>
        <TraySlot $w={30}><Chevron size={15} /></TraySlot>
        <TraySlot $w={31}>
          <svg width="17" height="16" viewBox="0 0 17 16" fill="none" stroke="#d8d8d8" strokeWidth="1.300"><path d="M1 14C1 7 7 1 15 1M4.500 15C4.500 9 9 4.500 15 4.500M8 15c0-4 3-7 7-7M11 15c0-2 2-4 4-4" /><circle cx="14" cy="14" r="1" fill="#fff" /></svg>
        </TraySlot>
        <TraySlot $w={29}><Battery size={19} /></TraySlot>
        <TraySlot $w={30}><Speaker size={19} /></TraySlot>
        <T w={28} ml={9} s={15} c="#fff">ENG</T>
        <TraySlot $w={17} />
        <Clock $gap={3}><T w={59} s={15} c="#fff">01:10 PM</T><T w={75} s={15} c="#fff">17-10-2020</T></Clock>
        <Notifier $ml={24} $mr={24}><Note size={20} /><CountBadge $s={20} $x={9} $y={8}>3</CountBadge></Notifier>
        <Divider $h={50} $c="#5a5a5a" /><TraySlot $w={6} />
      </Tray>
    </Taskbar>
  );
}

export default function App() {
  return (
    <>
      <Global />
      <Gradients />
      <Browser />
      <Main>
        <MeetingStage />
        <Chat />
      </Main>
      <LocalTaskbar />
    </>
  );
}
